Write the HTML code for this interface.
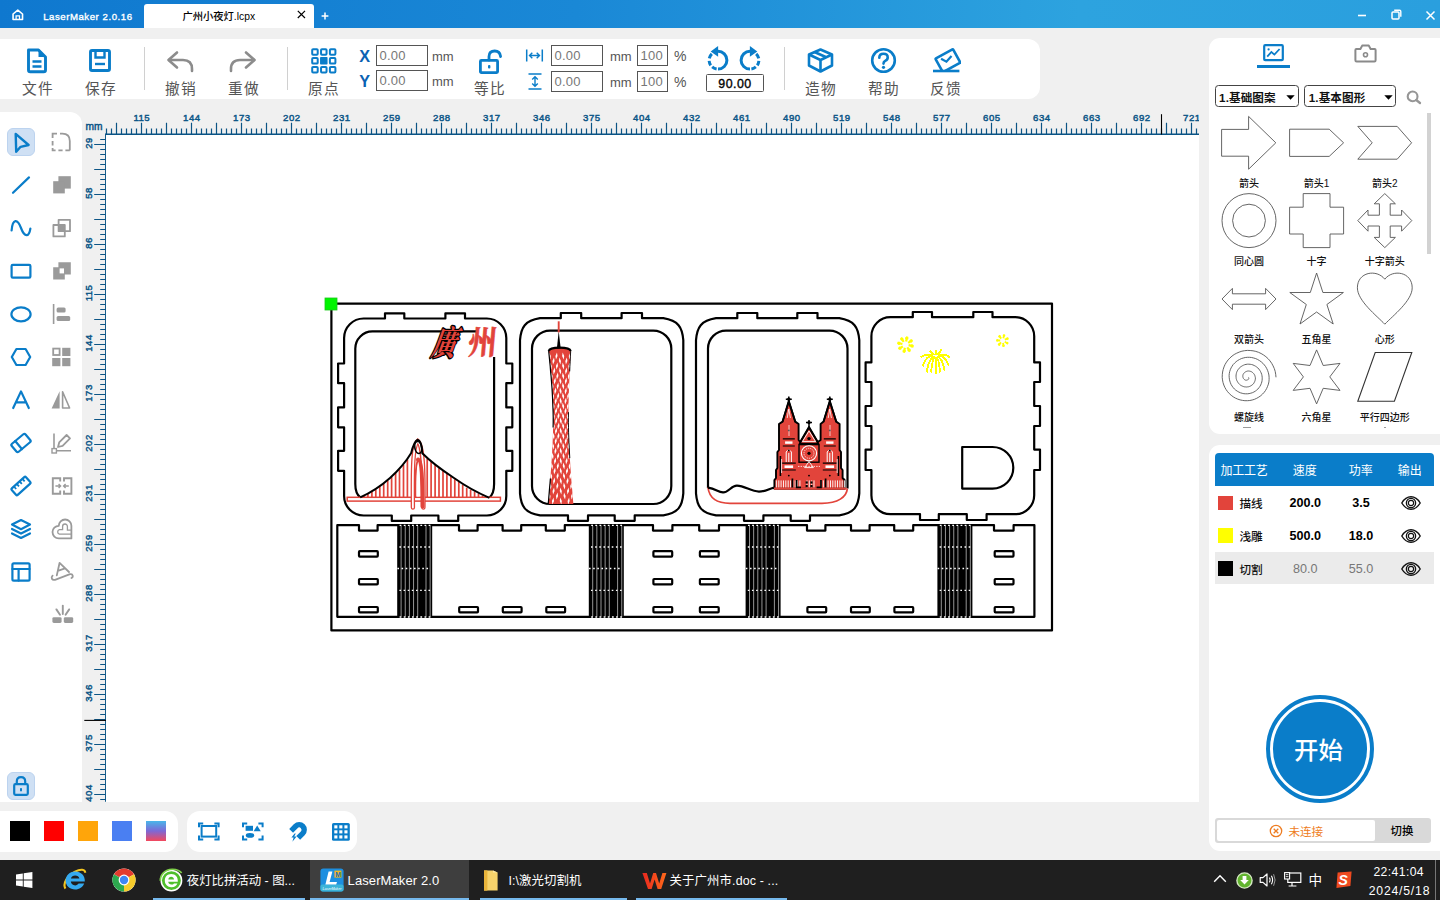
<!DOCTYPE html>
<html lang="zh"><head><meta charset="utf-8"><title>LaserMaker 2.0.16</title>
<style>

*{box-sizing:border-box;margin:0;padding:0}
html,body{width:1440px;height:900px;overflow:hidden;background:#f0f0f0;font-family:"Liberation Sans","Noto Sans CJK SC",sans-serif;}
.abs{position:absolute}
svg{position:absolute;overflow:visible}
.t{position:absolute;white-space:nowrap;line-height:1}
.panel{position:absolute;background:#fff}
#titlebar{position:absolute;left:0;top:0;width:1440px;height:28px;background:linear-gradient(90deg,#0f78cf 0%,#1a88d6 40%,#2da3df 75%,#2a9fde 100%)}
#tab{position:absolute;left:144px;top:4px;width:170px;height:24px;background:#fff;border-radius:3px 3px 0 0}
.tbl{position:absolute;padding-top:0.09em;margin-top:0.4px;margin-left:0px;font-size:14.7px;color:#555;letter-spacing:1.3px;line-height:1;white-space:nowrap;font-family:"Liberation Sans","Noto Sans CJK SC",sans-serif}
.inp{position:absolute;border:1px solid #555;background:#fff;font-size:13px;color:#777;line-height:20.4px;padding-left:2.4px;letter-spacing:0.3px;white-space:nowrap;overflow:hidden}
.mm{position:absolute;font-size:13px;color:#555;line-height:1;white-space:nowrap}
.sep{position:absolute;width:1px;background:#d0d0d0}
.rl{position:absolute;font-size:9.6px;font-weight:normal;letter-spacing:0.45px;-webkit-text-stroke:0.45px #0b5587;color:#0b5587;line-height:1;white-space:nowrap}
.shl{position:absolute;padding-top:0.09em;font-size:10px;color:#111;line-height:1;white-space:nowrap;text-align:center;font-family:"Liberation Sans","Noto Sans CJK SC",sans-serif;font-weight:500}
.tk{position:absolute;font-size:13px;color:#fff;line-height:1;white-space:nowrap;font-family:"Liberation Sans","Noto Sans CJK SC",sans-serif}

</style></head>
<body>
<!-- top -->

<div id="titlebar">
 <svg style="left:11.8px;top:9.2px" width="11.6" height="11.6" viewBox="0 0 13 13"><path d="M1.2 5.6 L6.5 1.2 L11.8 5.6 V11.8 H1.2 Z" fill="none" stroke="#fff" stroke-width="1.8" stroke-linejoin="round"/><path d="M4.6 11.8 V7.6 H8.4 V11.8" fill="none" stroke="#fff" stroke-width="1.4"/></svg>
 <div class="t" style="left:43.2px;top:11.6px;font-size:9.6px;color:#fff;letter-spacing:0.55px;-webkit-text-stroke:0.35px #fff">LaserMaker 2.0.16</div>
 <div id="tab"></div>
 <div class="t" style="left:182.4px;top:12px;font-size:10.3px;color:#000;font-weight:500;font-family:'Liberation Sans','Noto Sans CJK SC',sans-serif">广州小夜灯.lcpx</div>
 <svg style="left:297px;top:9.5px" width="9" height="9" viewBox="0 0 9 9"><path d="M0.8 0.8 L8 8 M8 0.8 L0.8 8" stroke="#000" stroke-width="1.2"/></svg>
 <svg style="left:321px;top:11.5px" width="8" height="8" viewBox="0 0 8 8"><path d="M4 0.6 V7.4 M0.6 4 H7.4" stroke="#fff" stroke-width="1.5"/></svg>
 <svg style="left:1357px;top:13.5px" width="10" height="3" viewBox="0 0 10 3"><path d="M1 1.5 H9" stroke="#fff" stroke-width="1.6"/></svg>
 <svg style="left:1390.6px;top:9.4px" width="11" height="11" viewBox="0 0 11 11"><rect x="1" y="3" width="7" height="7" rx="1" fill="none" stroke="#fff" stroke-width="1.5"/><path d="M3.2 1.2 H8.6 Q9.8 1.2 9.8 2.4 V7.8" fill="none" stroke="#fff" stroke-width="1.4"/></svg>
 <svg style="left:1424.6px;top:9.5px" width="11" height="11" viewBox="0 0 11 11"><path d="M1.5 1.5 L9.5 9.5 M9.5 1.5 L1.5 9.5" stroke="#fff" stroke-width="1.5"/></svg>
</div>
<div class="panel" style="left:-12px;top:39px;width:1052px;height:60px;border-radius:12px"></div>

<svg style="left:26px;top:48px" width="22" height="26" viewBox="0 0 22 26"><path d="M2.5 2 H12.5 L19.5 9 V22 Q19.5 23.8 17.7 23.8 H4.3 Q2.5 23.8 2.5 22 Z" fill="none" stroke="#0a7dc9" stroke-width="2.9" stroke-linejoin="round"/><path d="M12.5 2 V9 H19.5 Z" fill="#0a7dc9"/><path d="M6.5 13.5 H15.5 M6.5 18.5 H15.5" stroke="#0a7dc9" stroke-width="2.4"/></svg>
<div class="tbl" style="left:22px;top:80px">文件</div>
<svg style="left:88px;top:48px" width="24" height="26" viewBox="0 0 24 26"><rect x="2.5" y="2.5" width="19" height="20" rx="1.5" fill="none" stroke="#0a7dc9" stroke-width="2.9"/><path d="M7.5 2.5 V9.5 H16.5 V2.5" fill="none" stroke="#0a7dc9" stroke-width="2.4"/><path d="M7 16 H17" stroke="#0a7dc9" stroke-width="2.4"/></svg>
<div class="tbl" style="left:85px;top:80px">保存</div>
<div class="sep" style="left:144px;top:47px;height:43px"></div>
<svg style="left:166px;top:50px" width="28" height="24" viewBox="0 0 28 24"><path d="M11 2.5 L2.5 10 L11 17.5" fill="none" stroke="#8c8c8c" stroke-width="2.6" stroke-linecap="round" stroke-linejoin="round"/><path d="M3 10 H17 Q26 10 26 19 V21" fill="none" stroke="#8c8c8c" stroke-width="2.6" stroke-linecap="round"/></svg>
<div class="tbl" style="left:165px;top:80px">撤销</div>
<svg style="left:229px;top:50px" width="28" height="24" viewBox="0 0 28 24"><path d="M17 2.5 L25.5 10 L17 17.5" fill="none" stroke="#8c8c8c" stroke-width="2.6" stroke-linecap="round" stroke-linejoin="round"/><path d="M25 10 H11 Q2 10 2 19 V21" fill="none" stroke="#8c8c8c" stroke-width="2.6" stroke-linecap="round"/></svg>
<div class="tbl" style="left:228px;top:80px">重做</div>
<div class="sep" style="left:287px;top:47px;height:43px"></div>
<svg style="left:310.6px;top:47.8px" width="26" height="26" viewBox="0 0 26 26"><rect x="1.20" y="1.20" width="5.5" height="5.5" rx="0.9" fill="none" stroke="#0a7dc9" stroke-width="2"/><rect x="10.05" y="1.20" width="5.5" height="5.5" rx="0.9" fill="none" stroke="#0a7dc9" stroke-width="2"/><rect x="18.90" y="1.20" width="5.5" height="5.5" rx="0.9" fill="none" stroke="#0a7dc9" stroke-width="2"/><rect x="1.20" y="10.05" width="5.5" height="5.5" rx="0.9" fill="none" stroke="#0a7dc9" stroke-width="2"/><rect x="9.05" y="9.05" width="7.5" height="7.5" rx="0.8" fill="#0a7dc9"/><rect x="18.90" y="10.05" width="5.5" height="5.5" rx="0.9" fill="none" stroke="#0a7dc9" stroke-width="2"/><rect x="1.20" y="18.90" width="5.5" height="5.5" rx="0.9" fill="none" stroke="#0a7dc9" stroke-width="2"/><rect x="10.05" y="18.90" width="5.5" height="5.5" rx="0.9" fill="none" stroke="#0a7dc9" stroke-width="2"/><rect x="18.90" y="18.90" width="5.5" height="5.5" rx="0.9" fill="none" stroke="#0a7dc9" stroke-width="2"/></svg><div class="tbl" style="left:308px;top:80px">原点</div>

<div class="t" style="left:359.2px;top:47.6px;font-size:16.2px;font-weight:bold;color:#0b62b3">X</div>
<div class="t" style="left:359.2px;top:72.6px;font-size:16.2px;font-weight:bold;color:#0b62b3">Y</div>
<div class="inp" style="left:376px;top:45px;width:52px;height:21px">0.00</div>
<div class="inp" style="left:376px;top:70px;width:52px;height:21px">0.00</div>
<div class="mm" style="left:432px;top:50px">mm</div>
<div class="mm" style="left:432px;top:75px">mm</div>
<svg style="left:478px;top:49px" width="26" height="26" viewBox="0 0 26 26"><rect x="2.4" y="11.4" width="17.2" height="12.2" rx="1" fill="none" stroke="#0a7dc9" stroke-width="2.8"/><path d="M11 11 V7.5 Q11 2 16.7 2 Q22 2 22.6 7.5" fill="none" stroke="#0a7dc9" stroke-width="2.8" stroke-linecap="round"/><rect x="10" y="16" width="2.4" height="3.6" rx="1" fill="#0a7dc9"/></svg>
<div class="tbl" style="left:474px;top:80px">等比</div>
<svg style="left:525px;top:49px" width="19" height="13" viewBox="0 0 19 13"><path d="M1.7 0.5 V12.5 M17.3 0.5 V12.5" stroke="#0a7dc9" stroke-width="1.5"/><path d="M4.5 6.5 H14.5 M7.3 3.7 L4.5 6.5 L7.3 9.3 M11.7 3.7 L14.5 6.5 L11.7 9.3" fill="none" stroke="#0a7dc9" stroke-width="1.4"/></svg>
<svg style="left:528px;top:73px" width="14" height="17" viewBox="0 0 14 17"><path d="M0.5 1 H13.5 M0.5 16 H13.5" stroke="#0a7dc9" stroke-width="1.5"/><path d="M7 3.8 V13.2 M4.2 6.6 L7 3.8 L9.8 6.6 M4.2 10.4 L7 13.2 L9.8 10.4" fill="none" stroke="#0a7dc9" stroke-width="1.4"/></svg>
<div class="inp" style="left:551px;top:45px;width:52px;height:21px">0.00</div>
<div class="inp" style="left:551px;top:71px;width:52px;height:21px">0.00</div>
<div class="mm" style="left:610px;top:50px">mm</div>
<div class="mm" style="left:610px;top:76px">mm</div>
<div class="inp" style="left:637px;top:45px;width:31px;height:21px">100</div>
<div class="inp" style="left:637px;top:71px;width:31px;height:21px">100</div>
<div class="mm" style="left:674px;top:49px;font-size:14px">%</div>
<div class="mm" style="left:674px;top:75px;font-size:14px">%</div>
<svg style="left:706.3px;top:45px" width="24" height="26" viewBox="0 0 24 26"><path d="M12.00 6.30 A8.9 8.9 0 0 1 12.00 24.10" fill="none" stroke="#0a7dc9" stroke-width="3"/><path d="M10.61 23.99 A8.9 8.9 0 0 1 6.16 21.92" fill="none" stroke="#0a7dc9" stroke-width="3"/><path d="M4.71 20.30 A8.9 8.9 0 0 1 3.13 15.98" fill="none" stroke="#0a7dc9" stroke-width="3"/><path d="M3.29 13.35 A8.9 8.9 0 0 1 5.82 8.80" fill="none" stroke="#0a7dc9" stroke-width="3"/><path d="M4.7 6.5 L12.1 1.1 V11.8 Z" fill="#0a7dc9"/></svg><svg style="left:737.5px;top:45px" width="24" height="26" viewBox="0 0 24 26"><g transform="translate(24 0) scale(-1 1)"><path d="M12.00 6.30 A8.9 8.9 0 0 1 12.00 24.10" fill="none" stroke="#0a7dc9" stroke-width="3"/><path d="M10.61 23.99 A8.9 8.9 0 0 1 6.16 21.92" fill="none" stroke="#0a7dc9" stroke-width="3"/><path d="M4.71 20.30 A8.9 8.9 0 0 1 3.13 15.98" fill="none" stroke="#0a7dc9" stroke-width="3"/><path d="M3.29 13.35 A8.9 8.9 0 0 1 5.82 8.80" fill="none" stroke="#0a7dc9" stroke-width="3"/><path d="M4.7 6.5 L12.1 1.1 V11.8 Z" fill="#0a7dc9"/></g></svg>

<div class="inp" style="left:706px;top:74px;width:58px;height:18px;color:#000;line-height:18.6px;text-align:center;padding:0;font-size:12.4px;-webkit-text-stroke:0.35px #000;letter-spacing:0.45px;border-radius:1.5px">90.00</div>
<div class="sep" style="left:784px;top:47px;height:43px"></div>
<svg style="left:807px;top:48px" width="27" height="25" viewBox="0 0 27 25"><path d="M13.5 1.5 L25 6.5 V17.5 L13.5 23.5 L2 17.5 V6.5 Z" fill="none" stroke="#0a7dc9" stroke-width="2.6" stroke-linejoin="round"/><path d="M2 6.5 L13.5 12 L25 6.5 M13.5 12 V23.5 M7.5 4 L19.3 9.3" fill="none" stroke="#0a7dc9" stroke-width="2.6" stroke-linejoin="round"/></svg>
<div class="tbl" style="left:805px;top:80px">造物</div>
<svg style="left:870px;top:47px" width="27" height="27" viewBox="0 0 27 27"><circle cx="13.5" cy="13.5" r="11.3" fill="none" stroke="#0a7dc9" stroke-width="2.6"/><path d="M9.3 10.8 Q9.3 6.8 13.5 6.8 Q17.7 6.8 17.7 10.4 Q17.7 12.6 15.2 13.8 Q13.5 14.6 13.5 16.6" fill="none" stroke="#0a7dc9" stroke-width="2.6" stroke-linecap="round"/><circle cx="13.5" cy="20.3" r="1.6" fill="#0a7dc9"/></svg>
<div class="tbl" style="left:868px;top:80px">帮助</div>
<svg style="left:931px;top:47px" width="30" height="27" viewBox="0 0 30 27"><clipPath id="fbc"><rect x="0" y="0" width="30" height="23.4"/></clipPath><g clip-path="url(#fbc)"><g transform="rotate(-29 16 12)"><rect x="6" y="6.2" width="20" height="15.4" rx="0.6" fill="none" stroke="#0a7dc9" stroke-width="2.6"/><path d="M10.6 10.2 L15 14.4 L21.4 10.2" fill="none" stroke="#0a7dc9" stroke-width="2.2" transform="rotate(14 16 11)"/></g></g><path d="M2 24 H28.4" stroke="#0a7dc9" stroke-width="2.6"/></svg>
<div class="tbl" style="left:930px;top:80px">反馈</div>

<!-- left -->
<div class="panel" style="left:-12px;top:112px;width:94px;height:690px;border-radius:0 12px 0 0"></div>
<div class="abs" style="left:7px;top:128px;width:28px;height:28px;border-radius:6px;background:#cfe0f4;border:1px solid #bcd3ef"></div>
<svg style="left:7px;top:128px" width="28" height="28" viewBox="0 0 28 28"><path d="M8.7 5.9 L21.6 17 L13.6 18.8 L9.2 23.8 Z" fill="none" stroke="#0a7dc9" stroke-width="2.4" stroke-linejoin="round" stroke-linecap="round"/></svg>
<svg style="left:7px;top:171px" width="28" height="28" viewBox="0 0 28 28"><path d="M6 21.8 L22 6.4" fill="none" stroke="#0a7dc9" stroke-width="2.2" stroke-linejoin="round" stroke-linecap="round"/></svg>
<svg style="left:7px;top:214px" width="28" height="28" viewBox="0 0 28 28"><path d="M4.6 16.5 C5.6 4.5 10.5 4.5 14 14 C17.5 23.5 22 23.5 23.4 14.5" fill="none" stroke="#0a7dc9" stroke-width="2.2" stroke-linejoin="round" stroke-linecap="round"/></svg>
<svg style="left:7px;top:257px" width="28" height="28" viewBox="0 0 28 28"><rect x="4.6" y="7.8" width="18.8" height="12.8" rx="1.2" fill="none" stroke="#0a7dc9" stroke-width="2.2" stroke-linejoin="round" stroke-linecap="round"/></svg>
<svg style="left:7px;top:300px" width="28" height="28" viewBox="0 0 28 28"><ellipse cx="14" cy="14.3" rx="9.6" ry="7" fill="none" stroke="#0a7dc9" stroke-width="2.2" stroke-linejoin="round" stroke-linecap="round"/></svg>
<svg style="left:7px;top:343px" width="28" height="28" viewBox="0 0 28 28"><path d="M4.8 14 L9.4 6 H18.6 L23.2 14 L18.6 22 H9.4 Z" fill="none" stroke="#0a7dc9" stroke-width="2.2" stroke-linejoin="round" stroke-linecap="round"/></svg>
<svg style="left:7px;top:386px" width="28" height="28" viewBox="0 0 28 28"><path d="M6.2 22 L14 5.4 L21.8 22 M8.8 16.4 H19.2" fill="none" stroke="#0a7dc9" stroke-width="2.2" stroke-linejoin="round" stroke-linecap="round"/></svg>
<svg style="left:7px;top:429px" width="28" height="28" viewBox="0 0 28 28"><g transform="rotate(-40 14 14)"><rect x="5" y="8.8" width="18" height="10.4" rx="1.6" fill="none" stroke="#0a7dc9" stroke-width="2.2" stroke-linejoin="round" stroke-linecap="round"/><path d="M10.8 8.8 V19.2" fill="none" stroke="#0a7dc9" stroke-width="2.2" stroke-linejoin="round" stroke-linecap="round"/></g></svg>
<svg style="left:7px;top:472px" width="28" height="28" viewBox="0 0 28 28"><g transform="rotate(-42 14 14)"><rect x="4.4" y="9.6" width="19.2" height="8.8" rx="1.2" fill="none" stroke="#0a7dc9" stroke-width="2.2" stroke-linejoin="round" stroke-linecap="round"/><path d="M8.4 9.6 V13 M12.2 9.6 V13 M16 9.6 V13 M19.8 9.6 V13" fill="none" stroke="#0a7dc9" stroke-width="1.8"/></g></svg>
<svg style="left:7px;top:515px" width="28" height="28" viewBox="0 0 28 28"><path d="M14 5 L23 9.6 L14 14.2 L5 9.6 Z" fill="none" stroke="#0a7dc9" stroke-width="2.2" stroke-linejoin="round" stroke-linecap="round"/><path d="M5 14 L14 18.6 L23 14 M5 18.4 L14 23 L23 18.4" fill="none" stroke="#0a7dc9" stroke-width="2.2" stroke-linejoin="round" stroke-linecap="round"/></svg>
<svg style="left:7px;top:558px" width="28" height="28" viewBox="0 0 28 28"><rect x="5.4" y="5.4" width="17.2" height="17.2" rx="1.4" fill="none" stroke="#0a7dc9" stroke-width="2.2" stroke-linejoin="round" stroke-linecap="round"/><path d="M5.4 11 H22.6 M11.6 11 V22.6" fill="none" stroke="#0a7dc9" stroke-width="2.2" stroke-linejoin="round" stroke-linecap="round"/></svg>
<svg style="left:47px;top:128px" width="28" height="28" viewBox="0 0 28 28"><path d="M5.6 10 V5.6 H10 M5.6 13 V17.6 M5.6 20 V22.4 H8.6 M11.4 22.4 H15.6 M18.4 22.4 H22.8" fill="none" stroke="#9a9a9a" stroke-width="1.8"/><path d="M13 5.6 H15.4 Q22.8 5.6 22.8 13 V22.4" fill="none" stroke="#9a9a9a" stroke-width="1.8"/></svg>
<svg style="left:47px;top:171px" width="28" height="28" viewBox="0 0 28 28"><rect x="11.4" y="5.2" width="12.4" height="12.4" fill="#9a9a9a"/><rect x="6.2" y="10.2" width="11.6" height="12.2" fill="#9a9a9a"/></svg>
<svg style="left:47px;top:214px" width="28" height="28" viewBox="0 0 28 28"><rect x="11.6" y="5.8" width="11.4" height="11.4" fill="none" stroke="#9a9a9a" stroke-width="1.8" stroke-linejoin="round" stroke-linecap="round"/><rect x="6.4" y="11" width="11.4" height="11.4" fill="none" stroke="#9a9a9a" stroke-width="1.8" stroke-linejoin="round" stroke-linecap="round"/><rect x="11.6" y="11" width="6.2" height="6.2" fill="#9a9a9a"/></svg>
<svg style="left:47px;top:257px" width="28" height="28" viewBox="0 0 28 28"><path d="M11.4 5.2 H23.8 V17.6 H17.8 V22.4 H6.2 V10.2 H11.4 Z" fill="#9a9a9a"/><rect x="12.6" y="11.4" width="4.4" height="5" fill="#fff"/></svg>
<svg style="left:47px;top:300px" width="28" height="28" viewBox="0 0 28 28"><path d="M6.6 4 V24" fill="none" stroke="#9a9a9a" stroke-width="1.6"/><rect x="9.6" y="7.4" width="9" height="5" rx="1.5" fill="#9a9a9a"/><rect x="9.6" y="16" width="13.6" height="5" rx="1.5" fill="#9a9a9a"/></svg>
<svg style="left:47px;top:343px" width="28" height="28" viewBox="0 0 28 28"><rect x="6.2" y="5.6" width="6.4" height="6.4" fill="none" stroke="#9a9a9a" stroke-width="1.8"/><rect x="15.2" y="4.8" width="8.2" height="8.2" fill="#9a9a9a"/><rect x="5.2" y="15" width="8.2" height="8.2" fill="#9a9a9a"/><rect x="15.2" y="15" width="8.2" height="8.2" fill="#9a9a9a"/></svg>
<svg style="left:47px;top:386px" width="28" height="28" viewBox="0 0 28 28"><path d="M12.6 5.2 V22.6 H4.6 Z" fill="#9a9a9a"/><path d="M15.6 5.8 V22 H22.6 Z" fill="none" stroke="#9a9a9a" stroke-width="1.6" stroke-linejoin="round"/></svg>
<svg style="left:47px;top:429px" width="28" height="28" viewBox="0 0 28 28"><path d="M7 4.4 V20.6 M7.6 21.8 H24" fill="none" stroke="#9a9a9a" stroke-width="1.6"/><rect x="5" y="19.6" width="4.4" height="4.4" fill="#fff" stroke="#9a9a9a" stroke-width="1.4"/><path d="M11 18 L12.2 13.4 L19.6 6 L23 9.4 L15.6 16.8 Z" fill="none" stroke="#9a9a9a" stroke-width="1.8" stroke-linejoin="round" stroke-linecap="round"/></svg>
<svg style="left:47px;top:472px" width="28" height="28" viewBox="0 0 28 28"><path d="M13.2 9.6 V6.2 H5.8 V21.8 H13.2 V18.4 M17 9.6 V6.2 H24.4 V21.8 H17 V18.4" fill="none" stroke="#9a9a9a" stroke-width="1.9"/><path d="M8.4 14 H13.6 M11.6 12 L13.6 14 L11.6 16 M21.8 14 H16.6 M18.6 12 L16.6 14 L18.6 16" fill="none" stroke="#9a9a9a" stroke-width="1.4"/></svg>
<svg style="left:47px;top:515px" width="28" height="28" viewBox="0 0 28 28"><path d="M11.8 23.4 H24.4 V10.8 A6.3 6.3 0 0 0 11.8 10.8 A6.3 6.3 0 0 0 11.8 23.4 Z" fill="none" stroke="#9a9a9a" stroke-width="1.8" stroke-linejoin="round" stroke-linecap="round"/><path d="M24.4 19.2 H12.4 A2.4 2.4 0 0 1 12.4 14.6 H15.6 V11.4 A2.4 2.4 0 0 1 20.4 11.4 V15.2 H24.4" fill="none" stroke="#9a9a9a" stroke-width="1.3"/></svg>
<svg style="left:47px;top:558px" width="28" height="28" viewBox="0 0 28 28"><path d="M9.8 17.4 L12.6 4.8 L22 14 M10.8 12.8 L18 10.4" fill="none" stroke="#9a9a9a" stroke-width="1.8" stroke-linejoin="round" stroke-linecap="round"/><path d="M5.6 17.6 C3.6 19.6 5 22.6 8 21.8 L23 16.2 C26 15.4 26.6 19 24.4 20" fill="none" stroke="#9a9a9a" stroke-width="1.8" stroke-linejoin="round" stroke-linecap="round"/></svg>
<svg style="left:48px;top:601px" width="28" height="28" viewBox="0 0 28 28"><rect x="4.4" y="16.2" width="9.2" height="5.8" rx="1.4" fill="#9a9a9a"/><rect x="15.8" y="16.2" width="9.4" height="5.8" rx="1.4" fill="#9a9a9a"/><path d="M14.8 4.6 V13 M8.4 8.4 L12 13.8 M21.2 8.4 L17.6 13.8" fill="none" stroke="#9a9a9a" stroke-width="1.9" stroke-linecap="round"/></svg>
<div class="abs" style="left:7.2px;top:772.2px;width:27.6px;height:27.8px;border-radius:6px;background:#cfe0f4;border:1px solid #bcd3ef"></div>
<svg style="left:7px;top:772px" width="28" height="28" viewBox="0 0 28 28"><rect x="7.2" y="12.2" width="13.6" height="10.6" rx="1.2" fill="none" stroke="#0a7dc9" stroke-width="2.2" stroke-linejoin="round" stroke-linecap="round"/><path d="M9.8 12 V9.6 Q9.8 5.2 14 5.2 Q18.2 5.2 18.2 9.6 V12" fill="none" stroke="#0a7dc9" stroke-width="2.2" stroke-linejoin="round" stroke-linecap="round"/><rect x="13" y="16" width="2" height="3.4" rx="0.8" fill="#0a7dc9"/></svg>

<!-- ruler -->
<svg style="left:0;top:0" width="1440" height="900" viewBox="0 0 1440 900" shape-rendering="auto"><path d="M106.5 128.6V134M111.5 128.6V134M121.5 128.6V134M126.5 128.6V134M131.5 128.6V134M136.5 128.6V134M146.5 128.6V134M151.5 128.6V134M156.5 128.6V134M161.5 128.6V134M171.5 128.6V134M176.5 128.6V134M181.5 128.6V134M186.5 128.6V134M196.5 128.6V134M201.5 128.6V134M206.5 128.6V134M211.5 128.6V134M221.5 128.6V134M226.5 128.6V134M231.5 128.6V134M236.5 128.6V134M246.5 128.6V134M251.5 128.6V134M256.5 128.6V134M261.5 128.6V134M271.5 128.6V134M276.5 128.6V134M281.5 128.6V134M286.5 128.6V134M296.5 128.6V134M301.5 128.6V134M306.5 128.6V134M311.5 128.6V134M321.5 128.6V134M326.5 128.6V134M331.5 128.6V134M336.5 128.6V134M346.5 128.6V134M351.5 128.6V134M356.5 128.6V134M361.5 128.6V134M371.5 128.6V134M376.5 128.6V134M381.5 128.6V134M386.5 128.6V134M396.5 128.6V134M401.5 128.6V134M406.5 128.6V134M411.5 128.6V134M421.5 128.6V134M426.5 128.6V134M431.5 128.6V134M436.5 128.6V134M446.5 128.6V134M451.5 128.6V134M456.5 128.6V134M461.5 128.6V134M471.5 128.6V134M476.5 128.6V134M481.5 128.6V134M486.5 128.6V134M496.5 128.6V134M501.5 128.6V134M506.5 128.6V134M511.5 128.6V134M521.5 128.6V134M526.5 128.6V134M531.5 128.6V134M536.5 128.6V134M546.5 128.6V134M551.5 128.6V134M556.5 128.6V134M561.5 128.6V134M571.5 128.6V134M576.5 128.6V134M581.5 128.6V134M586.5 128.6V134M596.5 128.6V134M601.5 128.6V134M606.5 128.6V134M611.5 128.6V134M621.5 128.6V134M626.5 128.6V134M631.5 128.6V134M636.5 128.6V134M646.5 128.6V134M651.5 128.6V134M656.5 128.6V134M661.5 128.6V134M671.5 128.6V134M676.5 128.6V134M681.5 128.6V134M686.5 128.6V134M696.5 128.6V134M701.5 128.6V134M706.5 128.6V134M711.5 128.6V134M721.5 128.6V134M726.5 128.6V134M731.5 128.6V134M736.5 128.6V134M746.5 128.6V134M751.5 128.6V134M756.5 128.6V134M761.5 128.6V134M771.5 128.6V134M776.5 128.6V134M781.5 128.6V134M786.5 128.6V134M796.5 128.6V134M801.5 128.6V134M806.5 128.6V134M811.5 128.6V134M821.5 128.6V134M826.5 128.6V134M831.5 128.6V134M836.5 128.6V134M846.5 128.6V134M851.5 128.6V134M856.5 128.6V134M861.5 128.6V134M871.5 128.6V134M876.5 128.6V134M881.5 128.6V134M886.5 128.6V134M896.5 128.6V134M901.5 128.6V134M906.5 128.6V134M911.5 128.6V134M921.5 128.6V134M926.5 128.6V134M931.5 128.6V134M936.5 128.6V134M946.5 128.6V134M951.5 128.6V134M956.5 128.6V134M961.5 128.6V134M971.5 128.6V134M976.5 128.6V134M981.5 128.6V134M986.5 128.6V134M996.5 128.6V134M1001.5 128.6V134M1006.5 128.6V134M1011.5 128.6V134M1021.5 128.6V134M1026.5 128.6V134M1031.5 128.6V134M1036.5 128.6V134M1046.5 128.6V134M1051.5 128.6V134M1056.5 128.6V134M1061.5 128.6V134M1071.5 128.6V134M1076.5 128.6V134M1081.5 128.6V134M1086.5 128.6V134M1096.5 128.6V134M1101.5 128.6V134M1106.5 128.6V134M1111.5 128.6V134M1121.5 128.6V134M1126.5 128.6V134M1131.5 128.6V134M1136.5 128.6V134M1146.5 128.6V134M1151.5 128.6V134M1156.5 128.6V134M1161.5 128.6V134M1171.5 128.6V134M1176.5 128.6V134M1181.5 128.6V134M1186.5 128.6V134M1196.5 128.6V134M116.5 122.8V134M141.5 122.8V134M166.5 122.8V134M191.5 122.8V134M216.5 122.8V134M241.5 122.8V134M266.5 122.8V134M291.5 122.8V134M316.5 122.8V134M341.5 122.8V134M366.5 122.8V134M391.5 122.8V134M416.5 122.8V134M441.5 122.8V134M466.5 122.8V134M491.5 122.8V134M516.5 122.8V134M541.5 122.8V134M566.5 122.8V134M591.5 122.8V134M616.5 122.8V134M641.5 122.8V134M666.5 122.8V134M691.5 122.8V134M716.5 122.8V134M741.5 122.8V134M766.5 122.8V134M791.5 122.8V134M816.5 122.8V134M841.5 122.8V134M866.5 122.8V134M891.5 122.8V134M916.5 122.8V134M941.5 122.8V134M966.5 122.8V134M991.5 122.8V134M1016.5 122.8V134M1041.5 122.8V134M1066.5 122.8V134M1091.5 122.8V134M1116.5 122.8V134M1141.5 122.8V134M1166.5 122.8V134M1191.5 122.8V134" stroke="#0b5485" stroke-width="1.2" fill="none"/><path d="M100.2 139.5H105.5M94.2 144.5H105.5M100.2 149.5H105.5M100.2 154.5H105.5M100.2 159.5H105.5M100.2 164.5H105.5M94.2 169.5H105.5M100.2 174.5H105.5M100.2 179.5H105.5M100.2 184.5H105.5M100.2 189.5H105.5M94.2 194.5H105.5M100.2 199.5H105.5M100.2 204.5H105.5M100.2 209.5H105.5M100.2 214.5H105.5M94.2 219.5H105.5M100.2 224.5H105.5M100.2 229.5H105.5M100.2 234.5H105.5M100.2 239.5H105.5M94.2 244.5H105.5M100.2 249.5H105.5M100.2 254.5H105.5M100.2 259.5H105.5M100.2 264.5H105.5M94.2 269.5H105.5M100.2 274.5H105.5M100.2 279.5H105.5M100.2 284.5H105.5M100.2 289.5H105.5M94.2 294.5H105.5M100.2 299.5H105.5M100.2 304.5H105.5M100.2 309.5H105.5M100.2 314.5H105.5M94.2 319.5H105.5M100.2 324.5H105.5M100.2 329.5H105.5M100.2 334.5H105.5M100.2 339.5H105.5M94.2 344.5H105.5M100.2 349.5H105.5M100.2 354.5H105.5M100.2 359.5H105.5M100.2 364.5H105.5M94.2 369.5H105.5M100.2 374.5H105.5M100.2 379.5H105.5M100.2 384.5H105.5M100.2 389.5H105.5M94.2 394.5H105.5M100.2 399.5H105.5M100.2 404.5H105.5M100.2 409.5H105.5M100.2 414.5H105.5M94.2 419.5H105.5M100.2 424.5H105.5M100.2 429.5H105.5M100.2 434.5H105.5M100.2 439.5H105.5M94.2 444.5H105.5M100.2 449.5H105.5M100.2 454.5H105.5M100.2 459.5H105.5M100.2 464.5H105.5M94.2 469.5H105.5M100.2 474.5H105.5M100.2 479.5H105.5M100.2 484.5H105.5M100.2 489.5H105.5M94.2 494.5H105.5M100.2 499.5H105.5M100.2 504.5H105.5M100.2 509.5H105.5M100.2 514.5H105.5M94.2 519.5H105.5M100.2 524.5H105.5M100.2 529.5H105.5M100.2 534.5H105.5M100.2 539.5H105.5M94.2 544.5H105.5M100.2 549.5H105.5M100.2 554.5H105.5M100.2 559.5H105.5M100.2 564.5H105.5M94.2 569.5H105.5M100.2 574.5H105.5M100.2 579.5H105.5M100.2 584.5H105.5M100.2 589.5H105.5M94.2 594.5H105.5M100.2 599.5H105.5M100.2 604.5H105.5M100.2 609.5H105.5M100.2 614.5H105.5M94.2 619.5H105.5M100.2 624.5H105.5M100.2 629.5H105.5M100.2 634.5H105.5M100.2 639.5H105.5M94.2 644.5H105.5M100.2 649.5H105.5M100.2 654.5H105.5M100.2 659.5H105.5M100.2 664.5H105.5M94.2 669.5H105.5M100.2 674.5H105.5M100.2 679.5H105.5M100.2 684.5H105.5M100.2 689.5H105.5M94.2 694.5H105.5M100.2 699.5H105.5M100.2 704.5H105.5M100.2 709.5H105.5M100.2 714.5H105.5M94.2 719.5H105.5M100.2 724.5H105.5M100.2 729.5H105.5M100.2 734.5H105.5M100.2 739.5H105.5M94.2 744.5H105.5M100.2 749.5H105.5M100.2 754.5H105.5M100.2 759.5H105.5M100.2 764.5H105.5M94.2 769.5H105.5M100.2 774.5H105.5M100.2 779.5H105.5M100.2 784.5H105.5M100.2 789.5H105.5M94.2 794.5H105.5M100.2 799.5H105.5" stroke="#0b5485" stroke-width="1.2" fill="none"/><path d="M105.7 134.2 H1199" stroke="#0b5485" stroke-width="1.5" fill="none"/><path d="M105.7 133.5 V801.7" stroke="#0b5485" stroke-width="1.3" fill="none"/><path d="M1161.5 114.2 V134.5" stroke="#000" stroke-width="1.1" fill="none"/><path d="M84.3 720.4 H106" stroke="#000" stroke-width="1.1" fill="none"/></svg>
<div class="rl" style="left:85.4px;top:121.6px;font-size:10.2px;letter-spacing:0.2px">mm</div>
<div class="abs" style="left:106px;top:105px;width:1093px;height:30px;overflow:hidden"><div class="rl" style="left:20.8px;top:7.5px;width:30px;text-align:center">115</div><div class="rl" style="left:70.8px;top:7.5px;width:30px;text-align:center">144</div><div class="rl" style="left:120.8px;top:7.5px;width:30px;text-align:center">173</div><div class="rl" style="left:170.8px;top:7.5px;width:30px;text-align:center">202</div><div class="rl" style="left:220.8px;top:7.5px;width:30px;text-align:center">231</div><div class="rl" style="left:270.8px;top:7.5px;width:30px;text-align:center">259</div><div class="rl" style="left:320.8px;top:7.5px;width:30px;text-align:center">288</div><div class="rl" style="left:370.8px;top:7.5px;width:30px;text-align:center">317</div><div class="rl" style="left:420.8px;top:7.5px;width:30px;text-align:center">346</div><div class="rl" style="left:470.8px;top:7.5px;width:30px;text-align:center">375</div><div class="rl" style="left:520.8px;top:7.5px;width:30px;text-align:center">404</div><div class="rl" style="left:570.8px;top:7.5px;width:30px;text-align:center">432</div><div class="rl" style="left:620.8px;top:7.5px;width:30px;text-align:center">461</div><div class="rl" style="left:670.8px;top:7.5px;width:30px;text-align:center">490</div><div class="rl" style="left:720.8px;top:7.5px;width:30px;text-align:center">519</div><div class="rl" style="left:770.8px;top:7.5px;width:30px;text-align:center">548</div><div class="rl" style="left:820.8px;top:7.5px;width:30px;text-align:center">577</div><div class="rl" style="left:870.8px;top:7.5px;width:30px;text-align:center">605</div><div class="rl" style="left:920.8px;top:7.5px;width:30px;text-align:center">634</div><div class="rl" style="left:970.8px;top:7.5px;width:30px;text-align:center">663</div><div class="rl" style="left:1020.8px;top:7.5px;width:30px;text-align:center">692</div><div class="rl" style="left:1070.8px;top:7.5px;width:30px;text-align:center">721</div></div>
<div class="abs" style="left:82px;top:135px;width:24px;height:667px;overflow:hidden"><div class="rl" style="left:-8.3px;top:2.6px;width:30px;height:10px;text-align:center;transform:rotate(-90deg)">29</div><div class="rl" style="left:-8.3px;top:52.6px;width:30px;height:10px;text-align:center;transform:rotate(-90deg)">58</div><div class="rl" style="left:-8.3px;top:102.6px;width:30px;height:10px;text-align:center;transform:rotate(-90deg)">86</div><div class="rl" style="left:-8.3px;top:152.6px;width:30px;height:10px;text-align:center;transform:rotate(-90deg)">115</div><div class="rl" style="left:-8.3px;top:202.6px;width:30px;height:10px;text-align:center;transform:rotate(-90deg)">144</div><div class="rl" style="left:-8.3px;top:252.6px;width:30px;height:10px;text-align:center;transform:rotate(-90deg)">173</div><div class="rl" style="left:-8.3px;top:302.6px;width:30px;height:10px;text-align:center;transform:rotate(-90deg)">202</div><div class="rl" style="left:-8.3px;top:352.6px;width:30px;height:10px;text-align:center;transform:rotate(-90deg)">231</div><div class="rl" style="left:-8.3px;top:402.6px;width:30px;height:10px;text-align:center;transform:rotate(-90deg)">259</div><div class="rl" style="left:-8.3px;top:452.6px;width:30px;height:10px;text-align:center;transform:rotate(-90deg)">288</div><div class="rl" style="left:-8.3px;top:502.6px;width:30px;height:10px;text-align:center;transform:rotate(-90deg)">317</div><div class="rl" style="left:-8.3px;top:552.6px;width:30px;height:10px;text-align:center;transform:rotate(-90deg)">346</div><div class="rl" style="left:-8.3px;top:602.6px;width:30px;height:10px;text-align:center;transform:rotate(-90deg)">375</div><div class="rl" style="left:-8.3px;top:652.6px;width:30px;height:10px;text-align:center;transform:rotate(-90deg)">404</div></div>

<!-- canvas -->
<div class="abs" style="left:106.4px;top:135px;width:1092.8px;height:666.8px;background:#fff"></div>
<svg style="left:0;top:0" width="1440" height="900" viewBox="0 0 1440 900">
<rect x="331.4" y="303.6" width="720.6" height="326.8" fill="none" stroke="#000" stroke-width="2.2" stroke-linejoin="round"/>
<path d="M363.6 318.5 H385.0 V313.3 H404.3 V318.5 H445.4 V313.3 H465.0 V318.5 H486.8 A19.5 19.5 0 0 1 506.3 338.0 V363.5 H512.3 V383.2 H506.3 V407.4 H512.3 V427.3 H506.3 V450.8 H512.3 V470.8 H506.3 V496.0 A19.5 19.5 0 0 1 486.8 515.5 H458.2 V520.9 H438.4 V515.5 H411.2 V520.9 H391.8 V515.5 H363.6 A19.5 19.5 0 0 1 344.1 496.0 V470.8 H338.1 V450.8 H344.1 V427.3 H338.1 V407.4 H344.1 V383.2 H338.1 V363.5 H344.1 V338.0 A19.5 19.5 0 0 1 363.6 318.5 Z" fill="none" stroke="#000" stroke-width="2.2" stroke-linejoin="round"/>
<path d="M360.2 497.4 C356 494 355.3 490 355.3 484 V348.5 A17.1 17.1 0 0 1 372.4 331.4 H478 M494.1 357 V484 C494.1 490 493.5 494 489.4 497.6" fill="none" stroke="#000" stroke-width="2.2" stroke-linejoin="round"/>
<path d="M540.0 318.2 H560.8 V313.0 H581.2 V318.2 H621.6 V313.0 H642.0 V318.2 H663.3 C678.3 320.6 682.3 327.2 683.3 340.2 V493.4 C682.3 506.4 678.3 513.0 663.3 515.4 H634.7 V520.8 H614.7 V515.4 H588.0 V520.8 H568.0 V515.4 H540.0 C525.0 513.0 521.0 506.4 520.0 493.4 V340.2 C521.0 327.2 525.0 320.6 540.0 318.2 Z" fill="none" stroke="#000" stroke-width="2.2" stroke-linejoin="round"/>
<path d="M550.0 330.6 H653.3 A18.0 18.0 0 0 1 671.3 348.6 V486.0 A18.0 18.0 0 0 1 653.3 504.0 H550.0 A18.0 18.0 0 0 1 532.0 486.0 V348.6 A18.0 18.0 0 0 1 550.0 330.6 Z" fill="none" stroke="#000" stroke-width="2.2" stroke-linejoin="round"/>
<path d="M716.0 318.2 H737.3 V313.0 H757.3 V318.2 H797.3 V313.0 H817.5 V318.2 H839.3 C854.3 320.6 858.3 327.2 859.3 340.2 V493.4 C858.3 506.4 854.3 513.0 839.3 515.4 H810.0 V520.8 H790.7 V515.4 H763.4 V520.8 H744.0 V515.4 H716.0 C701.0 513.0 697.0 506.4 696.0 493.4 V340.2 C697.0 327.2 701.0 320.6 716.0 318.2 Z" fill="none" stroke="#000" stroke-width="2.2" stroke-linejoin="round"/>
<path d="M708 488 V348.6 A18 18 0 0 1 726 330.6 H829.5 A18 18 0 0 1 847.5 348.6 V488.5" fill="none" stroke="#000" stroke-width="2.2" stroke-linejoin="round"/>
<path d="M708 487.5 C709 496 714 503.3 730 503.3 H822 C838 503.3 846.5 497 847.4 488.6" fill="none" stroke="#e2443b" stroke-width="1.7"/>
<path d="M708 487.6 C716 489 718 492 723 492.3 C729 492.6 731 485.4 737 485.6 C745 486 751 491.5 759 491.6 C766 491.6 769 488.8 774 487.6" fill="none" stroke="#000" stroke-width="2.2" stroke-linejoin="round"/>
<path d="M890.4 317.2 H912.8 V312.0 H932.0 V317.2 H973.3 V312.0 H992.5 V317.2 H1015.2 A19.0 19.0 0 0 1 1034.2 336.2 V362.4 H1040.0 V382.0 H1034.2 V406.0 H1040.0 V426.0 H1034.2 V449.6 H1040.0 V470.0 H1034.2 V495.2 A19.0 19.0 0 0 1 1015.2 514.2 H986.6 V520.0 H966.8 V514.2 H938.8 V520.0 H920.0 V514.2 H890.4 A19.0 19.0 0 0 1 871.4 495.2 V470.0 H865.6 V449.6 H871.4 V426.0 H865.6 V406.0 H871.4 V382.0 H865.6 V362.4 H871.4 V336.2 A19.0 19.0 0 0 1 890.4 317.2 Z" fill="none" stroke="#000" stroke-width="2.2" stroke-linejoin="round"/>
<path d="M962.2 447 H992.5 A20.8 20.8 0 0 1 992.5 488.6 H962.2 Z" fill="none" stroke="#000" stroke-width="2.2" stroke-linejoin="round"/>
<path d="M337.3 525.2 H359.0 V530.6 H377.6 V525.2 H459.0 V530.6 H477.6 V525.2 H502.6 V530.6 H521.2 V525.2 H545.8 V530.6 H564.8 V525.2 H653.0 V530.6 H672.4 V525.2 H699.2 V530.6 H719.0 V525.2 H807.0 V530.6 H825.4 V525.2 H851.0 V530.6 H869.6 V525.2 H894.2 V530.6 H913.2 V525.2 H994.0 V530.6 H1013.6 V525.2 H1034.4 V616.8 H337.3 Z" fill="none" stroke="#000" stroke-width="2.2" stroke-linejoin="round"/>
<rect x="359.0" y="551.2" width="18.8" height="5.4" rx="0.8" fill="none" stroke="#000" stroke-width="2.2" stroke-linejoin="round"/><rect x="359.0" y="579.0" width="18.8" height="5.4" rx="0.8" fill="none" stroke="#000" stroke-width="2.2" stroke-linejoin="round"/><rect x="359.0" y="607.0" width="18.8" height="5.4" rx="0.8" fill="none" stroke="#000" stroke-width="2.2" stroke-linejoin="round"/><rect x="653.4" y="551.2" width="18.8" height="5.4" rx="0.8" fill="none" stroke="#000" stroke-width="2.2" stroke-linejoin="round"/><rect x="653.4" y="579.0" width="18.8" height="5.4" rx="0.8" fill="none" stroke="#000" stroke-width="2.2" stroke-linejoin="round"/><rect x="653.4" y="607.0" width="18.8" height="5.4" rx="0.8" fill="none" stroke="#000" stroke-width="2.2" stroke-linejoin="round"/><rect x="699.9" y="551.2" width="18.8" height="5.4" rx="0.8" fill="none" stroke="#000" stroke-width="2.2" stroke-linejoin="round"/><rect x="699.9" y="579.0" width="18.8" height="5.4" rx="0.8" fill="none" stroke="#000" stroke-width="2.2" stroke-linejoin="round"/><rect x="699.9" y="607.0" width="18.8" height="5.4" rx="0.8" fill="none" stroke="#000" stroke-width="2.2" stroke-linejoin="round"/><rect x="994.7" y="551.2" width="18.8" height="5.4" rx="0.8" fill="none" stroke="#000" stroke-width="2.2" stroke-linejoin="round"/><rect x="994.7" y="579.0" width="18.8" height="5.4" rx="0.8" fill="none" stroke="#000" stroke-width="2.2" stroke-linejoin="round"/><rect x="994.7" y="607.0" width="18.8" height="5.4" rx="0.8" fill="none" stroke="#000" stroke-width="2.2" stroke-linejoin="round"/><rect x="459.2" y="607.0" width="18.8" height="5.4" rx="0.8" fill="none" stroke="#000" stroke-width="2.2" stroke-linejoin="round"/><rect x="502.8" y="607.0" width="18.8" height="5.4" rx="0.8" fill="none" stroke="#000" stroke-width="2.2" stroke-linejoin="round"/><rect x="546.3" y="607.0" width="18.8" height="5.4" rx="0.8" fill="none" stroke="#000" stroke-width="2.2" stroke-linejoin="round"/><rect x="807.4" y="607.0" width="18.8" height="5.4" rx="0.8" fill="none" stroke="#000" stroke-width="2.2" stroke-linejoin="round"/><rect x="851.0" y="607.0" width="18.8" height="5.4" rx="0.8" fill="none" stroke="#000" stroke-width="2.2" stroke-linejoin="round"/><rect x="894.4" y="607.0" width="18.8" height="5.4" rx="0.8" fill="none" stroke="#000" stroke-width="2.2" stroke-linejoin="round"/>
<rect x="397.2" y="524.6" width="35" height="93" fill="#000"/><path d="M401.10 526V616.5M405.25 526V616.5M409.40 526V616.5M413.55 526V616.5M417.70 526V616.5M426.00 526V616.5M430.15 526V616.5" stroke="#d4d4d4" stroke-width="0.7" fill="none"/><path d="M399.40 547H401.00 M399.40 590.4H401.00M397.40 568.5H399.00M399.60 525.4H401.40 M399.60 617H401.40M403.55 547H405.15 M403.55 590.4H405.15M401.55 568.5H403.15M403.75 525.4H405.55 M403.75 617H405.55M407.70 547H409.30 M407.70 590.4H409.30M405.70 568.5H407.30M407.90 525.4H409.70 M407.90 617H409.70M411.85 547H413.45 M411.85 590.4H413.45M409.85 568.5H411.45M412.05 525.4H413.85 M412.05 617H413.85M416.00 547H417.60 M416.00 590.4H417.60M414.00 568.5H415.60M416.20 525.4H418.00 M416.20 617H418.00M420.15 547H421.75 M420.15 590.4H421.75M418.15 568.5H419.75M420.35 525.4H422.15 M420.35 617H422.15M424.30 547H425.90 M424.30 590.4H425.90M422.30 568.5H423.90M424.50 525.4H426.30 M424.50 617H426.30M428.45 547H430.05 M428.45 590.4H430.05M426.45 568.5H428.05M428.65 525.4H430.45 M428.65 617H430.45" stroke="#fff" stroke-width="1.3" fill="none"/>
<rect x="588.8" y="524.6" width="35" height="93" fill="#000"/><path d="M592.70 526V616.5M596.85 526V616.5M601.00 526V616.5M605.15 526V616.5M609.30 526V616.5M617.60 526V616.5M621.75 526V616.5" stroke="#d4d4d4" stroke-width="0.7" fill="none"/><path d="M591.00 547H592.60 M591.00 590.4H592.60M589.00 568.5H590.60M591.20 525.4H593.00 M591.20 617H593.00M595.15 547H596.75 M595.15 590.4H596.75M593.15 568.5H594.75M595.35 525.4H597.15 M595.35 617H597.15M599.30 547H600.90 M599.30 590.4H600.90M597.30 568.5H598.90M599.50 525.4H601.30 M599.50 617H601.30M603.45 547H605.05 M603.45 590.4H605.05M601.45 568.5H603.05M603.65 525.4H605.45 M603.65 617H605.45M607.60 547H609.20 M607.60 590.4H609.20M605.60 568.5H607.20M607.80 525.4H609.60 M607.80 617H609.60M611.75 547H613.35 M611.75 590.4H613.35M609.75 568.5H611.35M611.95 525.4H613.75 M611.95 617H613.75M615.90 547H617.50 M615.90 590.4H617.50M613.90 568.5H615.50M616.10 525.4H617.90 M616.10 617H617.90M620.05 547H621.65 M620.05 590.4H621.65M618.05 568.5H619.65M620.25 525.4H622.05 M620.25 617H622.05" stroke="#fff" stroke-width="1.3" fill="none"/>
<rect x="745.6" y="524.6" width="35" height="93" fill="#000"/><path d="M749.50 526V616.5M753.65 526V616.5M757.80 526V616.5M761.95 526V616.5M766.10 526V616.5M774.40 526V616.5M778.55 526V616.5" stroke="#d4d4d4" stroke-width="0.7" fill="none"/><path d="M747.80 547H749.40 M747.80 590.4H749.40M745.80 568.5H747.40M748.00 525.4H749.80 M748.00 617H749.80M751.95 547H753.55 M751.95 590.4H753.55M749.95 568.5H751.55M752.15 525.4H753.95 M752.15 617H753.95M756.10 547H757.70 M756.10 590.4H757.70M754.10 568.5H755.70M756.30 525.4H758.10 M756.30 617H758.10M760.25 547H761.85 M760.25 590.4H761.85M758.25 568.5H759.85M760.45 525.4H762.25 M760.45 617H762.25M764.40 547H766.00 M764.40 590.4H766.00M762.40 568.5H764.00M764.60 525.4H766.40 M764.60 617H766.40M768.55 547H770.15 M768.55 590.4H770.15M766.55 568.5H768.15M768.75 525.4H770.55 M768.75 617H770.55M772.70 547H774.30 M772.70 590.4H774.30M770.70 568.5H772.30M772.90 525.4H774.70 M772.90 617H774.70M776.85 547H778.45 M776.85 590.4H778.45M774.85 568.5H776.45M777.05 525.4H778.85 M777.05 617H778.85" stroke="#fff" stroke-width="1.3" fill="none"/>
<rect x="937.4" y="524.6" width="35" height="93" fill="#000"/><path d="M941.30 526V616.5M945.45 526V616.5M949.60 526V616.5M953.75 526V616.5M957.90 526V616.5M966.20 526V616.5M970.35 526V616.5" stroke="#d4d4d4" stroke-width="0.7" fill="none"/><path d="M939.60 547H941.20 M939.60 590.4H941.20M937.60 568.5H939.20M939.80 525.4H941.60 M939.80 617H941.60M943.75 547H945.35 M943.75 590.4H945.35M941.75 568.5H943.35M943.95 525.4H945.75 M943.95 617H945.75M947.90 547H949.50 M947.90 590.4H949.50M945.90 568.5H947.50M948.10 525.4H949.90 M948.10 617H949.90M952.05 547H953.65 M952.05 590.4H953.65M950.05 568.5H951.65M952.25 525.4H954.05 M952.25 617H954.05M956.20 547H957.80 M956.20 590.4H957.80M954.20 568.5H955.80M956.40 525.4H958.20 M956.40 617H958.20M960.35 547H961.95 M960.35 590.4H961.95M958.35 568.5H959.95M960.55 525.4H962.35 M960.55 617H962.35M964.50 547H966.10 M964.50 590.4H966.10M962.50 568.5H964.10M964.70 525.4H966.50 M964.70 617H966.50M968.65 547H970.25 M968.65 590.4H970.25M966.65 568.5H968.25M968.85 525.4H970.65 M968.85 617H970.65" stroke="#fff" stroke-width="1.3" fill="none"/>
<rect x="325" y="298" width="12" height="12" fill="#00f500" stroke="#19c819" stroke-width="0.8"/>
</svg>
<svg style="left:0;top:0" width="1440" height="900" viewBox="0 0 1440 900">
<path d="M364.0 495.9V497M367.9 493.9V497M371.9 491.8V497M375.8 489.5V497M379.8 486.5V497M383.7 483.5V497M387.7 480.6V497M391.6 476.9V497M395.6 473.1V497M399.5 469.4V497M403.5 464.7V497M407.4 459.4V497M427.2 458.7V497M431.1 461.9V497M435.1 465.0V497M439.0 468.1V497M443.0 471.0V497M446.9 473.8V497M450.9 476.5V497M454.8 479.3V497M458.8 482.1V497M462.7 484.9V497M466.7 487.7V497M470.6 489.7V497M474.6 491.6V497M478.5 493.6V497M482.5 495.4V497M486.4 497.1V497" stroke="#e2443b" stroke-width="1.7" fill="none"/>
<rect x="347.2" y="497.3" width="153.2" height="3.8" fill="#fff" stroke="#e2443b" stroke-width="1.5"/>
<path d="M412.9 507.5 C412.6 470 412.6 446 417.8 441 C423.2 446 423.8 470 423.4 507.5" fill="none" stroke="#e2443b" stroke-width="4.4" stroke-linecap="round"/>
<path d="M412.9 507.5 C412.6 470 412.6 446 417.8 441 C423.2 446 423.8 470 423.4 507.5" fill="none" stroke="#fff" stroke-width="1.8" stroke-linecap="round"/>
<path d="M415.4 497 C415.2 478 415.6 461.5 418.4 459.8" fill="none" stroke="#e2443b" stroke-width="2" stroke-linecap="round"/>
<path d="M418 459.6 C421.8 460 422.4 480 422.5 506.5" fill="none" stroke="#e2443b" stroke-width="4" stroke-linecap="round"/>
<path d="M416.6 496.4 C416.6 480 416.8 468 418 464.5 C419.4 468 419.6 480 419.7 496.4 Z" fill="#fff"/>
<path d="M360.2 497.4 C370 493 381 486 390 478 C400 469 407 460 411.2 453 C412.6 447 414 441.5 417.4 439.8 C420.5 440 422.4 447 422.3 453.2 C430 461 442 470 454 478 C466 486.5 478 493 489.4 497.8" fill="none" stroke="#000" stroke-width="2" stroke-linejoin="round"/>
<ellipse cx="418.2" cy="447.5" rx="3.4" ry="6" fill="none" stroke="#000" stroke-width="1.6" transform="rotate(-8 418.2 447.5)"/>
<clipPath id="twc"><path d="M548.7 351.0 C550 346.6 569.4 346.6 570.7 351.0 L570.4 356.1 L570.2 361.2 L569.9 366.3 L569.7 371.4 L569.5 376.5 L569.3 381.6 L569.1 386.7 L568.9 391.8 L568.8 396.9 L568.6 402.0 L568.5 407.1 L568.5 412.2 L568.4 417.3 L568.4 422.4 L568.5 427.5 L568.6 432.6 L568.8 437.7 L569.0 442.8 L569.3 447.9 L569.5 453.0 L569.8 458.1 L570.2 463.2 L570.5 468.3 L570.9 473.4 L571.2 478.5 L571.6 483.6 L572.1 488.7 L572.5 493.8 L572.9 498.9 L573.4 504.0 L548.2 504.0 L548.7 498.9 L549.1 493.8 L549.5 488.7 L550.0 483.6 L550.4 478.5 L550.7 473.4 L551.1 468.3 L551.4 463.2 L551.8 458.1 L552.1 453.0 L552.3 447.9 L552.6 442.8 L552.8 437.7 L553.0 432.6 L553.1 427.5 L553.2 422.4 L553.2 417.3 L553.1 412.2 L552.9 407.1 L552.7 402.0 L552.5 396.9 L552.2 391.8 L551.9 386.7 L551.5 381.6 L551.1 376.5 L550.6 371.4 L550.2 366.3 L549.7 361.2 L549.2 356.1 L548.7 351.0 Z"/></clipPath>
<path d="M548.7 351.0 C550 346.6 569.4 346.6 570.7 351.0 L570.4 356.1 L570.2 361.2 L569.9 366.3 L569.7 371.4 L569.5 376.5 L569.3 381.6 L569.1 386.7 L568.9 391.8 L568.8 396.9 L568.6 402.0 L568.5 407.1 L568.5 412.2 L568.4 417.3 L568.4 422.4 L568.5 427.5 L568.6 432.6 L568.8 437.7 L569.0 442.8 L569.3 447.9 L569.5 453.0 L569.8 458.1 L570.2 463.2 L570.5 468.3 L570.9 473.4 L571.2 478.5 L571.6 483.6 L572.1 488.7 L572.5 493.8 L572.9 498.9 L573.4 504.0 L548.2 504.0 L548.7 498.9 L549.1 493.8 L549.5 488.7 L550.0 483.6 L550.4 478.5 L550.7 473.4 L551.1 468.3 L551.4 463.2 L551.8 458.1 L552.1 453.0 L552.3 447.9 L552.6 442.8 L552.8 437.7 L553.0 432.6 L553.1 427.5 L553.2 422.4 L553.2 417.3 L553.1 412.2 L552.9 407.1 L552.7 402.0 L552.5 396.9 L552.2 391.8 L551.9 386.7 L551.5 381.6 L551.1 376.5 L550.6 371.4 L550.2 366.3 L549.7 361.2 L549.2 356.1 L548.7 351.0 Z" fill="#e2443b"/>
<path d="M549.29 352.40L550.84 356.00L550.29 359.60L548.74 356.00ZM556.98 352.40L557.53 356.00L555.98 359.60L555.43 356.00ZM562.66 352.40L564.21 356.00L563.66 359.60L562.11 356.00ZM570.35 352.40L570.90 356.00L569.35 359.60L568.80 356.00ZM554.00 357.40L554.55 361.00L553.00 364.60L552.45 361.00ZM559.44 357.40L560.99 361.00L560.44 364.60L558.89 361.00ZM566.88 357.40L567.43 361.00L565.88 364.60L565.33 361.00ZM572.32 357.40L573.87 361.00L573.32 364.60L571.77 361.00ZM550.25 362.40L551.80 366.00L551.25 369.60L549.70 366.00ZM557.45 362.40L558.00 366.00L556.45 369.60L555.90 366.00ZM562.66 362.40L564.21 366.00L563.66 369.60L562.11 366.00ZM569.86 362.40L570.41 366.00L568.86 369.60L568.31 366.00ZM554.69 367.40L555.24 371.00L553.69 374.60L553.14 371.00ZM559.67 367.40L561.22 371.00L560.67 374.60L559.12 371.00ZM566.64 367.40L567.19 371.00L565.64 374.60L565.09 371.00ZM571.61 367.40L573.16 371.00L572.61 374.60L571.06 371.00ZM551.14 372.40L552.69 376.00L552.14 379.60L550.59 376.00ZM557.89 372.40L558.44 376.00L556.89 379.60L556.34 376.00ZM562.65 372.40L564.20 376.00L563.65 379.60L562.10 376.00ZM569.41 372.40L569.96 376.00L568.41 379.60L567.86 376.00ZM555.32 377.40L555.87 381.00L554.32 384.60L553.77 381.00ZM559.87 377.40L561.42 381.00L560.87 384.60L559.32 381.00ZM566.42 377.40L566.97 381.00L565.42 384.60L564.87 381.00ZM570.97 377.40L572.52 381.00L571.97 384.60L570.42 381.00ZM551.91 382.40L553.46 386.00L552.91 389.60L551.36 386.00ZM558.28 382.40L558.83 386.00L557.28 389.60L556.73 386.00ZM562.64 382.40L564.19 386.00L563.64 389.60L562.09 386.00ZM569.01 382.40L569.56 386.00L568.01 389.60L567.46 386.00ZM555.85 387.40L556.40 391.00L554.85 394.60L554.30 391.00ZM560.04 387.40L561.59 391.00L561.04 394.60L559.49 391.00ZM566.24 387.40L566.79 391.00L565.24 394.60L564.69 391.00ZM570.43 387.40L571.98 391.00L571.43 394.60L569.88 391.00ZM552.54 392.40L554.09 396.00L553.54 399.60L551.99 396.00ZM558.59 392.40L559.14 396.00L557.59 399.60L557.04 396.00ZM562.64 392.40L564.19 396.00L563.64 399.60L562.09 396.00ZM568.69 392.40L569.24 396.00L567.69 399.60L567.14 396.00ZM556.26 397.40L556.81 401.00L555.26 404.60L554.71 401.00ZM560.18 397.40L561.73 401.00L561.18 404.60L559.63 401.00ZM566.10 397.40L566.65 401.00L565.10 404.60L564.55 401.00ZM570.02 397.40L571.57 401.00L571.02 404.60L569.47 401.00ZM553.00 402.40L554.55 406.00L554.00 409.60L552.45 406.00ZM558.82 402.40L559.37 406.00L557.82 409.60L557.27 406.00ZM562.64 402.40L564.19 406.00L563.64 409.60L562.09 406.00ZM568.46 402.40L569.01 406.00L567.46 409.60L566.91 406.00ZM556.52 407.40L557.07 411.00L555.52 414.60L554.97 411.00ZM560.26 407.40L561.81 411.00L561.26 414.60L559.71 411.00ZM566.01 407.40L566.56 411.00L565.01 414.60L564.46 411.00ZM569.75 407.40L571.30 411.00L570.75 414.60L569.20 411.00ZM553.25 412.40L554.80 416.00L554.25 419.60L552.70 416.00ZM558.94 412.40L559.49 416.00L557.94 419.60L557.39 416.00ZM562.63 412.40L564.18 416.00L563.63 419.60L562.08 416.00ZM568.33 412.40L568.88 416.00L567.33 419.60L566.78 416.00ZM556.63 417.40L557.18 421.00L555.63 424.60L555.08 421.00ZM560.30 417.40L561.85 421.00L561.30 424.60L559.75 421.00ZM565.97 417.40L566.52 421.00L564.97 424.60L564.42 421.00ZM569.64 417.40L571.19 421.00L570.64 424.60L569.09 421.00ZM553.26 422.40L554.81 426.00L554.26 429.60L552.71 426.00ZM558.95 422.40L559.50 426.00L557.95 429.60L557.40 426.00ZM562.65 422.40L564.20 426.00L563.65 429.60L562.10 426.00ZM568.34 422.40L568.89 426.00L567.34 429.60L566.79 426.00ZM556.53 427.40L557.08 431.00L555.53 434.60L554.98 431.00ZM560.30 427.40L561.85 431.00L561.30 434.60L559.75 431.00ZM566.07 427.40L566.62 431.00L565.07 434.60L564.52 431.00ZM569.84 427.40L571.39 431.00L570.84 434.60L569.29 431.00ZM552.98 432.40L554.53 436.00L553.98 439.60L552.43 436.00ZM558.86 432.40L559.41 436.00L557.86 439.60L557.31 436.00ZM562.74 432.40L564.29 436.00L563.74 439.60L562.19 436.00ZM568.62 432.40L569.17 436.00L567.62 439.60L567.07 436.00ZM556.28 437.40L556.83 441.00L555.28 444.60L554.73 441.00ZM560.30 437.40L561.85 441.00L561.30 444.60L559.75 441.00ZM566.32 437.40L566.87 441.00L565.32 444.60L564.77 441.00ZM570.34 437.40L571.89 441.00L571.34 444.60L569.79 441.00ZM552.54 442.40L554.09 446.00L553.54 449.60L551.99 446.00ZM558.71 442.40L559.26 446.00L557.71 449.60L557.16 446.00ZM562.89 442.40L564.44 446.00L563.89 449.60L562.34 446.00ZM569.06 442.40L569.61 446.00L568.06 449.60L567.51 446.00ZM555.95 447.40L556.50 451.00L554.95 454.60L554.40 451.00ZM560.30 447.40L561.85 451.00L561.30 454.60L559.75 451.00ZM566.65 447.40L567.20 451.00L565.65 454.60L565.10 451.00ZM570.99 447.40L572.54 451.00L571.99 454.60L570.44 451.00ZM552.00 452.40L553.55 456.00L553.00 459.60L551.45 456.00ZM558.53 452.40L559.08 456.00L557.53 459.60L556.98 456.00ZM563.07 452.40L564.62 456.00L564.07 459.60L562.52 456.00ZM569.60 452.40L570.15 456.00L568.60 459.60L568.05 456.00ZM555.56 457.40L556.11 461.00L554.56 464.60L554.01 461.00ZM560.30 457.40L561.85 461.00L561.30 464.60L559.75 461.00ZM567.04 457.40L567.59 461.00L566.04 464.60L565.49 461.00ZM571.78 457.40L573.33 461.00L572.78 464.60L571.23 461.00ZM551.36 462.40L552.91 466.00L552.36 469.60L550.81 466.00ZM558.32 462.40L558.87 466.00L557.32 469.60L556.77 466.00ZM563.28 462.40L564.83 466.00L564.28 469.60L562.73 466.00ZM570.24 462.40L570.79 466.00L569.24 469.60L568.69 466.00ZM555.11 467.40L555.66 471.00L554.11 474.60L553.56 471.00ZM560.30 467.40L561.85 471.00L561.30 474.60L559.75 471.00ZM567.49 467.40L568.04 471.00L566.49 474.60L565.94 471.00ZM572.68 467.40L574.23 471.00L573.68 474.60L572.13 471.00ZM550.65 472.40L552.20 476.00L551.65 479.60L550.10 476.00ZM558.08 472.40L558.63 476.00L557.08 479.60L556.53 476.00ZM563.52 472.40L565.07 476.00L564.52 479.60L562.97 476.00ZM570.95 472.40L571.50 476.00L569.95 479.60L569.40 476.00ZM554.61 477.40L555.16 481.00L553.61 484.60L553.06 481.00ZM560.30 477.40L561.85 481.00L561.30 484.60L559.75 481.00ZM567.99 477.40L568.54 481.00L566.99 484.60L566.44 481.00ZM573.68 477.40L575.23 481.00L574.68 484.60L573.13 481.00ZM549.87 482.40L551.42 486.00L550.87 489.60L549.32 486.00ZM557.82 482.40L558.37 486.00L556.82 489.60L556.27 486.00ZM563.78 482.40L565.33 486.00L564.78 489.60L563.23 486.00ZM571.73 482.40L572.28 486.00L570.73 489.60L570.18 486.00ZM554.07 487.40L554.62 491.00L553.07 494.60L552.52 491.00ZM560.30 487.40L561.85 491.00L561.30 494.60L559.75 491.00ZM568.53 487.40L569.08 491.00L567.53 494.60L566.98 491.00ZM574.76 487.40L576.31 491.00L575.76 494.60L574.21 491.00ZM549.02 492.40L550.57 496.00L550.02 499.60L548.47 496.00ZM557.54 492.40L558.09 496.00L556.54 499.60L555.99 496.00ZM564.06 492.40L565.61 496.00L565.06 499.60L563.51 496.00ZM572.58 492.40L573.13 496.00L571.58 499.60L571.03 496.00ZM553.48 497.40L554.03 501.00L552.48 504.60L551.93 501.00ZM560.30 497.40L561.85 501.00L561.30 504.60L559.75 501.00ZM569.12 497.40L569.67 501.00L568.12 504.60L567.57 501.00ZM575.93 497.40L577.48 501.00L576.93 504.60L575.38 501.00Z" fill="#fff" clip-path="url(#twc)"/>
<path d="M548.7 351.0 C550 346.6 569.4 346.6 570.7 351.0" fill="none" stroke="#000" stroke-width="2.2"/>
<path d="M548.7 351.0 L549.2 356.1 L549.7 361.2 L550.2 366.3 L550.6 371.4 L551.1 376.5 L551.5 381.6 L551.9 386.7 L552.2 391.8 L552.5 396.9 L552.7 402.0 L552.9 407.1 L553.1 412.2 L553.2 417.3 L553.2 422.4 L553.1 427.5" fill="none" stroke="#000" stroke-width="1.2"/>
<path d="M550.4 478.5 L550.0 483.6 L549.5 488.7 L549.1 493.8 L548.7 498.9 L548.2 504.0" fill="none" stroke="#000" stroke-width="1.2"/>
<path d="M570.7 351.0 L570.4 356.1 L570.2 361.2 L569.9 366.3 L569.7 371.4" fill="none" stroke="#000" stroke-width="0.9"/>
<path d="M568.5 412.2 L568.4 417.3 L568.4 422.4 L568.5 427.5 L568.6 432.6 L568.8 437.7 L569.0 442.8 L569.3 447.9 L569.5 453.0 L569.8 458.1" fill="none" stroke="#000" stroke-width="0.9"/>
<path d="M558.7 331 L560.7 348.4 H556.9 Z" fill="#000"/>
<path d="M558.7 321.3 V332.4" stroke="#e2443b" stroke-width="1.9" fill="none"/>
<path d="M774.4 488.8 V480 L776 478 V470 L777.4 468 V452 L779 450 V424 L782.6 421.6 L788.8 401 L795.2 421.6 L798.6 424 V440 L800.2 442 L809 427 L817.8 442 L820.6 440 V424 L823.6 421.6 L829.8 401 L836.2 421.6 L839.6 424 V450 L841 452 V468 L842.6 470 V478 L844.6 480 V488.8 Z" fill="#e2443b" stroke="#000" stroke-width="1.9" stroke-linejoin="round"/>
<path d="M774 488.6 H846.6" stroke="#e2443b" stroke-width="2.4"/>
<path d="M782.4 422 L788.8 401.5 L795.4 422 M823.4 422 L829.8 401.5 L836.4 422 M799.6 443.6 L809 427.4 L818.4 443.6 Z" fill="none" stroke="#000" stroke-width="1.7" stroke-linejoin="round"/>
<circle cx="788.8" cy="399.2" r="1.7" fill="#000"/><path d="M785.8 399.2H791.8 M788.8 396.6V403.7" stroke="#000" stroke-width="1.5"/>
<circle cx="829.8" cy="399.2" r="1.7" fill="#000"/><path d="M826.8 399.2H832.8 M829.8 396.6V403.7" stroke="#000" stroke-width="1.5"/>
<circle cx="809.0" cy="422.6" r="1.7" fill="#000"/><path d="M806.0 422.6H812.0 M809.0 420.0V427.1" stroke="#000" stroke-width="1.5"/>
<rect x="785.1" y="441.4" width="7.4" height="2.4" fill="#fff"/><rect x="784.5" y="465.4" width="8.6" height="2.6" fill="#fff"/><path d="M782.8 438.8H794.8 M782.8 446H794.8 M781.8 463.2H795.8 M781.8 470H795.8" stroke="#000" stroke-width="1.2"/><path d="M786.2 462 V452 Q788.8 448 791.4 452 V462 M788.8 462 V453" fill="none" stroke="#fff" stroke-width="1"/><circle cx="788.8" cy="430.4" r="0.9" fill="#000"/><circle cx="788.8" cy="450.4" r="0.9" fill="#000"/><circle cx="788.8" cy="475.6" r="0.9" fill="#000"/><path d="M789.0 425V436" stroke="#fff" stroke-width="0.7"/><path d="M787.2 418 L788.8 409 L790.4 418" fill="none" stroke="#fff" stroke-width="0.8"/>
<rect x="826.1" y="441.4" width="7.4" height="2.4" fill="#fff"/><rect x="825.5" y="465.4" width="8.6" height="2.6" fill="#fff"/><path d="M823.8 438.8H835.8 M823.8 446H835.8 M822.8 463.2H836.8 M822.8 470H836.8" stroke="#000" stroke-width="1.2"/><path d="M827.2 462 V452 Q829.8 448 832.4 452 V462 M829.8 462 V453" fill="none" stroke="#fff" stroke-width="1"/><circle cx="829.8" cy="430.4" r="0.9" fill="#000"/><circle cx="829.8" cy="450.4" r="0.9" fill="#000"/><circle cx="829.8" cy="475.6" r="0.9" fill="#000"/><path d="M830.0 425V436" stroke="#fff" stroke-width="0.7"/><path d="M828.2 418 L829.8 409 L831.4 418" fill="none" stroke="#fff" stroke-width="0.8"/>
<path d="M802.4 441.6 L809 431 L815.6 441.6 Z" fill="none" stroke="#fff" stroke-width="0.9"/>
<circle cx="809" cy="438.6" r="1.7" fill="#000"/>
<rect x="799" y="444.6" width="20" height="17.6" fill="none" stroke="#000" stroke-width="1.4"/>
<circle cx="809" cy="453.3" r="7.6" fill="#e2443b" stroke="#fff" stroke-width="1.1"/>
<circle cx="809" cy="453.3" r="5" fill="none" stroke="#fff" stroke-width="0.8" stroke-dasharray="1.2 1"/>
<circle cx="809" cy="453.3" r="1.6" fill="#000"/>
<path d="M804.6 467.6 L809 461.6 L813.4 467.6 Z" fill="none" stroke="#fff" stroke-width="0.9"/>
<path d="M798 466.4 H820" stroke="#fff" stroke-width="0.8" stroke-dasharray="1.4 1.2"/>
<path d="M780.4 456 V476 M838.4 456 V476" stroke="#000" stroke-width="1.6"/>
<path d="M781.6 459 V473 M837.2 459 V473" stroke="#fff" stroke-width="0.8"/>
<path d="M776.4 480.4V487.4M778.8 480.4V487.4M781.1 480.4V487.4M783.5 480.4V487.4M785.8 480.4V487.4M788.2 480.4V487.4M790.5 480.4V487.4M792.9 480.4V487.4M795.2 480.4V487.4M797.6 480.4V487.4M799.9 480.4V487.4M807.0 480.4V487.4M809.3 480.4V487.4M811.7 480.4V487.4M814.0 480.4V487.4M821.1 480.4V487.4M823.4 480.4V487.4M825.8 480.4V487.4M828.1 480.4V487.4M830.5 480.4V487.4M832.8 480.4V487.4M835.2 480.4V487.4M837.5 480.4V487.4M839.9 480.4V487.4M842.2 480.4V487.4M844.6 480.4V487.4" stroke="#fff" stroke-width="0.9"/>
<path d="M792.4 478.6 V487.4 M796.6 480 V487.4 H801 M821 480 V487.4 H816.6 M825.6 478.6 V487.4" stroke="#000" stroke-width="1.7" fill="none"/>
<rect x="805.6" y="481.4" width="2.2" height="2.2" fill="#000"/><rect x="810.4" y="481.4" width="2.2" height="2.2" fill="#000"/><rect x="805.6" y="485" width="2.2" height="2.2" fill="#000"/><rect x="810.4" y="485" width="2.2" height="2.2" fill="#000"/>
<circle cx="809" cy="475.6" r="0.9" fill="#000"/>
<path d="M908.6 345.2L913.7 346.3M907.3 347.3L910.1 351.6M904.9 347.7L903.8 352.8M902.8 346.4L898.5 349.2M902.4 344.0L897.3 342.9M903.7 341.9L900.9 337.6M906.1 341.5L907.2 336.4M908.2 342.8L912.5 340.0" stroke="#ffff00" stroke-width="2.2" fill="none"/><path d="M910.9 345.7L912.9 346.1M908.5 349.2L909.6 350.9M904.4 350.0L904.0 352.0M900.9 347.6L899.2 348.7M900.1 343.5L898.1 343.1M902.5 340.0L901.4 338.3M906.6 339.2L907.0 337.2M910.1 341.6L911.8 340.5" stroke="#ffff00" stroke-width="3.2" fill="none"/><path d="M1004.7 341.8L1008.2 343.7M1003.0 343.0L1003.7 346.9M1001.0 342.4L998.4 345.4M1000.2 340.5L996.2 340.3M1001.2 338.6L998.9 335.4M1003.3 338.3L1004.3 334.4M1004.8 339.7L1008.5 338.1" stroke="#ffff00" stroke-width="1.8" fill="none"/><path d="M1006.5 342.7L1007.9 343.5M1003.4 344.9L1003.6 346.5M999.7 343.9L998.6 345.1M998.2 340.4L996.6 340.3M1000.0 337.0L999.1 335.7M1003.8 336.4L1004.2 334.8M1006.7 338.9L1008.1 338.3" stroke="#ffff00" stroke-width="2.4" fill="none"/><path d="M933.4 355.7 Q925.8 352.8 920.6 357.5M933.6 356.6 Q926.8 354.2 922.6 366.5M934.2 357.2 Q929.4 356.6 926.6 372.5M934.9 357.2 Q932.5 358.1 931.1 372.5M935.6 357.3 Q935.6 360.0 935.6 373.5M936.3 357.2 Q938.7 358.1 940.1 372.5M937.0 357.0 Q941.8 356.1 944.6 370.5M937.6 356.5 Q944.4 354.0 948.6 365.5M937.8 355.7 Q945.1 352.8 950.1 357.5M934.7 355.0 Q931.8 353.4 929.6 350.5M936.5 354.9 Q939.4 353.2 941.6 349.5M935.6 354.9 Q935.6 354.0 935.6 349.5" stroke="#ffff00" stroke-width="1.9" fill="none" shape-rendering="crispEdges"/>
<text x="430.6" y="355.4" font-family="'Liberation Serif','Noto Serif CJK SC','Noto Sans CJK SC',serif" font-weight="700" font-size="30" fill="#e2443b" stroke="#000" stroke-width="2.6" paint-order="stroke" stroke-linejoin="round" transform="translate(430.6 355.4) skewX(-20) scale(0.8 1.13) translate(-430.6 -355.4)">廣</text>
<text x="467.4" y="353.6" font-family="'Liberation Serif','Noto Serif CJK SC','Noto Sans CJK SC',serif" font-weight="700" font-size="27" fill="#e2443b" stroke="#e2443b" stroke-width="0.5" transform="translate(467.4 353.6) skewX(-5) scale(1.06 1.22) translate(-467.4 -353.6)">州</text>
</svg>

<!-- right -->
<div class="panel" style="left:1209px;top:38px;width:245px;height:396px;border-radius:11px"></div>
<div class="panel" style="left:1209px;top:445.4px;width:245px;height:405.2px;border-radius:11px"></div>
<svg style="left:1263px;top:44px" width="21" height="18" viewBox="0 0 21 18"><rect x="1.2" y="1.2" width="18.6" height="15" rx="1" fill="none" stroke="#0a7dc9" stroke-width="2.2"/><path d="M4.2 12.6 L8.4 8 L11.4 10.6 L16.6 5" fill="none" stroke="#0a7dc9" stroke-width="1.8"/><circle cx="5.6" cy="5.4" r="1.1" fill="#0a7dc9"/></svg>
<div class="abs" style="left:1257px;top:65px;width:33px;height:3px;background:#0a7dc9"></div>
<svg style="left:1354px;top:44px" width="23" height="19" viewBox="0 0 23 19"><path d="M2.4 5 H6.4 L8.2 1.6 H14.8 L16.6 5 H20.6 Q21.6 5 21.6 6 V16.2 Q21.6 17.4 20.4 17.4 H2.6 Q1.4 17.4 1.4 16.2 V6 Q1.4 5 2.4 5 Z" fill="none" stroke="#8a8a8a" stroke-width="2" stroke-linejoin="round"/><circle cx="11.5" cy="10.8" r="2" fill="none" stroke="#8a8a8a" stroke-width="1.6"/></svg>
<div class="abs" style="left:1214.5px;top:85.2px;width:84.0px;height:21.8px;border:1px solid #444;border-radius:3.5px;background:#fff"></div><div class="t" style="left:1219.1px;top:91.6px;font-size:11.6px;font-weight:bold;letter-spacing:0.1px;color:#111;font-family:'Liberation Sans','Noto Sans CJK SC',sans-serif">1.基础图案</div><svg style="left:1285.9px;top:94.8px" width="9" height="5" viewBox="0 0 9 5"><path d="M0.3 0.2 H8.7 L4.5 4.8 Z" fill="#000"/></svg>
<div class="abs" style="left:1304.2px;top:85.2px;width:92.2px;height:21.8px;border:1px solid #444;border-radius:3.5px;background:#fff"></div><div class="t" style="left:1308.8px;top:91.6px;font-size:11.6px;font-weight:bold;letter-spacing:0.1px;color:#111;font-family:'Liberation Sans','Noto Sans CJK SC',sans-serif">1.基本图形</div><svg style="left:1383.8px;top:94.8px" width="9" height="5" viewBox="0 0 9 5"><path d="M0.3 0.2 H8.7 L4.5 4.8 Z" fill="#000"/></svg>
<svg style="left:1406px;top:90px" width="16" height="15" viewBox="0 0 16 15"><circle cx="6.6" cy="6.4" r="4.9" fill="none" stroke="#969696" stroke-width="2.1"/><path d="M10.2 10 L14 13" stroke="#969696" stroke-width="2.3" stroke-linecap="round"/></svg>
<div class="abs" style="left:1427.4px;top:112.6px;width:3.4px;height:141px;background:#d2d2d2"></div>
<svg style="left:0;top:0" width="1440" height="900" viewBox="0 0 1440 900">
<path d="M1221.6 129.4 L1248.6 129.4 L1248.6 116.4 L1275.8 142.8 L1248.6 169.2 L1248.6 156.2 L1221.6 156.2 Z" fill="none" stroke="#555" stroke-width="0.9" stroke-linejoin="miter"/><path d="M1289.6 129.2 L1329.2 129.2 L1343.6 142.8 L1329.2 156.4 L1289.6 156.4 Z" fill="none" stroke="#555" stroke-width="0.9" stroke-linejoin="miter"/><path d="M1357.8 126.4 L1397.2 126.4 L1411.6 142.8 L1397.2 159.2 L1357.8 159.2 L1372.2 142.8 Z" fill="none" stroke="#555" stroke-width="0.9" stroke-linejoin="miter"/><circle cx="1249.0" cy="220.6" r="27" fill="none" stroke="#555" stroke-width="0.9" stroke-linejoin="miter"/><circle cx="1249.0" cy="220.6" r="16.4" fill="none" stroke="#555" stroke-width="0.9" stroke-linejoin="miter"/><path d="M1303.2 193.6 L1330.0 193.6 L1330.0 207.2 L1343.6 207.2 L1343.6 234.0 L1330.0 234.0 L1330.0 247.6 L1303.2 247.6 L1303.2 234.0 L1289.6 234.0 L1289.6 207.2 L1303.2 207.2 Z" fill="none" stroke="#555" stroke-width="0.9" stroke-linejoin="miter"/><path d="M1384.8 193.6 L1395.4 203.8 L1390.2 203.8 L1390.2 215.2 L1401.6 215.2 L1401.6 210.0 L1411.8 220.6 L1401.6 231.2 L1401.6 226.0 L1390.2 226.0 L1390.2 237.4 L1395.4 237.4 L1384.8 247.6 L1374.2 237.4 L1379.4 237.4 L1379.4 226.0 L1368.0 226.0 L1368.0 231.2 L1357.8 220.6 L1368.0 210.0 L1368.0 215.2 L1379.4 215.2 L1379.4 203.8 L1374.2 203.8 Z" fill="none" stroke="#555" stroke-width="0.9" stroke-linejoin="miter"/><path d="M1222.0 299.0 L1232.4 288.4 L1232.4 293.8 L1265.6 293.8 L1265.6 288.4 L1276.0 299.0 L1265.6 309.6 L1265.6 304.2 L1232.4 304.2 L1232.4 309.6 Z" fill="none" stroke="#555" stroke-width="0.9" stroke-linejoin="miter"/><path d="M1316.6 273.0 L1322.9 292.5 L1343.4 292.5 L1326.9 304.5 L1333.2 324.0 L1316.6 312.0 L1300.0 324.0 L1306.3 304.5 L1289.8 292.5 L1310.3 292.5 Z" fill="none" stroke="#555" stroke-width="0.9" stroke-linejoin="miter"/><path d="M1384.8 324.2 C1376.8 315.8 1357.4 300.8 1357.4 287.8 C1357.4 271.8 1376.8 268.8 1384.8 279.2 C1392.8 268.8 1412.2 271.8 1412.2 287.8 C1412.2 300.8 1392.8 315.8 1384.8 324.2 Z" fill="none" stroke="#555" stroke-width="0.9" stroke-linejoin="miter"/><path d="M1248.4 377.3L1248.5 377.4L1248.6 377.6L1248.7 377.7L1248.7 377.9L1248.8 378.1L1248.8 378.3L1248.7 378.5L1248.7 378.7L1248.6 378.9L1248.5 379.2L1248.3 379.4L1248.1 379.6L1247.9 379.7L1247.7 379.9L1247.4 380.0L1247.1 380.1L1246.8 380.2L1246.5 380.2L1246.1 380.2L1245.8 380.2L1245.4 380.1L1245.0 379.9L1244.7 379.7L1244.4 379.5L1244.0 379.2L1243.8 378.9L1243.5 378.6L1243.3 378.2L1243.1 377.8L1243.0 377.3L1242.9 376.8L1242.8 376.3L1242.8 375.8L1242.9 375.3L1243.0 374.8L1243.2 374.3L1243.5 373.8L1243.8 373.3L1244.2 372.9L1244.6 372.5L1245.1 372.1L1245.6 371.8L1246.2 371.5L1246.8 371.3L1247.4 371.1L1248.1 371.0L1248.7 371.0L1249.4 371.1L1250.1 371.2L1250.8 371.5L1251.4 371.7L1252.1 372.1L1252.7 372.6L1253.2 373.1L1253.7 373.6L1254.2 374.3L1254.6 375.0L1254.9 375.7L1255.1 376.5L1255.3 377.3L1255.4 378.1L1255.4 379.0L1255.2 379.8L1255.0 380.7L1254.7 381.5L1254.3 382.3L1253.9 383.1L1253.3 383.9L1252.7 384.5L1251.9 385.1L1251.1 385.7L1250.3 386.1L1249.4 386.5L1248.4 386.8L1247.4 386.9L1246.4 387.0L1245.4 386.9L1244.3 386.8L1243.3 386.5L1242.3 386.1L1241.3 385.6L1240.4 385.1L1239.6 384.4L1238.8 383.6L1238.1 382.7L1237.5 381.7L1236.9 380.7L1236.5 379.6L1236.2 378.5L1236.1 377.3L1236.0 376.1L1236.1 374.9L1236.3 373.7L1236.6 372.5L1237.1 371.3L1237.7 370.2L1238.4 369.2L1239.2 368.2L1240.1 367.3L1241.2 366.5L1242.3 365.8L1243.5 365.2L1244.7 364.7L1246.0 364.4L1247.4 364.2L1248.8 364.2L1250.2 364.3L1251.5 364.5L1252.9 364.9L1254.2 365.5L1255.5 366.2L1256.7 367.0L1257.8 367.9L1258.8 369.0L1259.7 370.2L1260.5 371.5L1261.1 372.8L1261.7 374.3L1262.0 375.8L1262.2 377.3L1262.2 378.9L1262.1 380.4L1261.8 382.0L1261.3 383.5L1260.7 385.0L1259.9 386.4L1259.0 387.7L1257.9 389.0L1256.7 390.1L1255.4 391.1L1253.9 392.0L1252.4 392.7L1250.8 393.2L1249.1 393.6L1247.4 393.8L1245.7 393.8L1243.9 393.7L1242.2 393.3L1240.5 392.8L1238.9 392.1L1237.3 391.2L1235.8 390.2L1234.4 389.0L1233.2 387.6L1232.1 386.1L1231.1 384.5L1230.4 382.8L1229.8 381.0L1229.4 379.2L1229.2 377.3L1229.1 375.4L1229.3 373.5L1229.7 371.6L1230.3 369.7L1231.1 367.9L1232.1 366.2L1233.2 364.5L1234.6 363.1L1236.1 361.7L1237.7 360.5L1239.5 359.5L1241.3 358.6L1243.3 358.0L1245.3 357.5L1247.4 357.3L1249.5 357.3L1251.6 357.5L1253.7 358.0L1255.7 358.6L1257.7 359.5L1259.5 360.6L1261.3 361.9L1262.9 363.3L1264.4 365.0L1265.7 366.7L1266.8 368.7L1267.7 370.7L1268.4 372.8L1268.9 375.0L1269.1 377.3L1269.1 379.6L1268.9 381.9L1268.4 384.1L1267.6 386.3L1266.7 388.4L1265.5 390.5L1264.1 392.4L1262.5 394.1L1260.8 395.7L1258.8 397.1L1256.7 398.3L1254.5 399.3L1252.2 400.0L1249.8 400.5L1247.4 400.7L1244.9 400.7L1242.5 400.4L1240.1 399.9L1237.7 399.1L1235.4 398.1L1233.2 396.8L1231.2 395.3L1229.3 393.6L1227.6 391.7L1226.1 389.6L1224.8 387.3L1223.8 385.0L1223.0 382.5L1222.5 379.9L1222.2 377.3L1222.3 374.7L1222.6 372.0L1223.2 369.4L1224.0 366.9L1225.1 364.4L1226.5 362.1L1228.1 359.9L1230.0 357.9L1232.0 356.1L1234.2 354.5L1236.7 353.2L1239.2 352.1L1241.9 351.2L1244.6 350.7L1247.4 350.4L1250.2 350.5L1253.0 350.8L1255.8 351.4L1258.5 352.3L1261.1 353.5L1263.6 355.0L1265.9 356.7L1268.1 358.7L1270.0 360.9L1271.7 363.3L1273.1 365.9L1274.3 368.6L1275.2 371.4L1275.7 374.3L1276.0 377.3" fill="none" stroke="#555" stroke-width="0.9" stroke-linejoin="miter"/><path d="M1316.6 349.9 L1323.2 365.5 L1340.0 363.4 L1329.8 376.9 L1340.0 390.4 L1323.2 388.3 L1316.6 403.9 L1310.0 388.3 L1293.2 390.4 L1303.4 376.9 L1293.2 363.4 L1310.0 365.5 Z" fill="none" stroke="#555" stroke-width="0.9" stroke-linejoin="miter"/><path d="M1375.2 352.5 L1411.8 352.5 L1394.4 401.3 L1357.8 401.3 Z" fill="none" stroke="#333" stroke-width="1.1"/></svg>
<div class="shl" style="left:1209.0px;top:178.1px;width:80px">箭头</div><div class="shl" style="left:1276.6px;top:178.1px;width:80px">箭头1</div><div class="shl" style="left:1344.8px;top:178.1px;width:80px">箭头2</div><div class="shl" style="left:1209.0px;top:255.9px;width:80px">同心圆</div><div class="shl" style="left:1276.6px;top:255.9px;width:80px">十字</div><div class="shl" style="left:1344.8px;top:255.9px;width:80px">十字箭头</div><div class="shl" style="left:1209.0px;top:334.3px;width:80px">双箭头</div><div class="shl" style="left:1276.6px;top:334.3px;width:80px">五角星</div><div class="shl" style="left:1344.8px;top:334.3px;width:80px">心形</div><div class="shl" style="left:1209.0px;top:412.1px;width:80px">螺旋线</div><div class="shl" style="left:1276.6px;top:412.1px;width:80px">六角星</div><div class="shl" style="left:1344.8px;top:412.1px;width:80px">平行四边形</div>
<div class="abs" style="left:1243px;top:427px;width:8px;height:1px;background:#999"></div><div class="abs" style="left:1384px;top:427px;width:2px;height:1px;background:#999"></div>
<div class="abs" style="left:1215.2px;top:452.8px;width:218.6px;height:33.4px;background:#0a7dc9;border-radius:4px 4px 0 0"></div>
<div class="t" style="left:1220.4px;top:464px;padding-top:0.09em;font-size:12px;color:#fff;font-family:'Liberation Sans','Noto Sans CJK SC',sans-serif;letter-spacing:-0.2px">加工工艺</div><div class="t" style="left:1264.8px;top:465.1px;width:80px;text-align:center;font-size:12px;color:#fff;font-family:'Liberation Sans','Noto Sans CJK SC',sans-serif">速度</div><div class="t" style="left:1320.8px;top:465.1px;width:80px;text-align:center;font-size:12px;color:#fff;font-family:'Liberation Sans','Noto Sans CJK SC',sans-serif">功率</div><div class="t" style="left:1369.8px;top:465.1px;width:80px;text-align:center;font-size:12px;color:#fff;font-family:'Liberation Sans','Noto Sans CJK SC',sans-serif">输出</div>
<div class="abs" style="left:1215.2px;top:552px;width:218.6px;height:32.4px;background:#ebebeb"></div>
<div class="abs" style="left:1218.2px;top:495.6px;width:14.4px;height:14.4px;background:#e2443b"></div><div class="t" style="left:1239.4px;top:497.0px;padding-top:0.09em;font-size:11.6px;color:#111;font-weight:500;font-family:'Liberation Sans','Noto Sans CJK SC',sans-serif">描线</div><div class="t" style="left:1265.2px;top:497.1px;width:80px;text-align:center;font-size:12.6px;color:#000;font-weight:bold;font-family:'Liberation Sans','Noto Sans CJK SC',sans-serif">200.0</div><div class="t" style="left:1321.0px;top:497.1px;width:80px;text-align:center;font-size:12.6px;color:#000;font-weight:bold;font-family:'Liberation Sans','Noto Sans CJK SC',sans-serif">3.5</div><svg style="left:1400.6px;top:496.2px" width="20" height="14" viewBox="0 0 20 14"><path d="M0.8 7 C4 1.6 8 0.8 10 0.8 C12 0.8 16 1.6 19.2 7 C16 12.4 12 13.2 10 13.2 C8 13.2 4 12.4 0.8 7 Z" fill="none" stroke="#111" stroke-width="1.4"/><circle cx="10" cy="7" r="4.6" fill="none" stroke="#111" stroke-width="1.4"/><circle cx="10" cy="7" r="2.6" fill="none" stroke="#111" stroke-width="1.1"/></svg>
<div class="abs" style="left:1218.2px;top:528.4px;width:14.4px;height:14.4px;background:#ffff00"></div><div class="t" style="left:1239.4px;top:529.8px;padding-top:0.09em;font-size:11.6px;color:#111;font-weight:500;font-family:'Liberation Sans','Noto Sans CJK SC',sans-serif">浅雕</div><div class="t" style="left:1265.2px;top:529.9px;width:80px;text-align:center;font-size:12.6px;color:#000;font-weight:bold;font-family:'Liberation Sans','Noto Sans CJK SC',sans-serif">500.0</div><div class="t" style="left:1321.0px;top:529.9px;width:80px;text-align:center;font-size:12.6px;color:#000;font-weight:bold;font-family:'Liberation Sans','Noto Sans CJK SC',sans-serif">18.0</div><svg style="left:1400.6px;top:529.0px" width="20" height="14" viewBox="0 0 20 14"><path d="M0.8 7 C4 1.6 8 0.8 10 0.8 C12 0.8 16 1.6 19.2 7 C16 12.4 12 13.2 10 13.2 C8 13.2 4 12.4 0.8 7 Z" fill="none" stroke="#111" stroke-width="1.4"/><circle cx="10" cy="7" r="4.6" fill="none" stroke="#111" stroke-width="1.4"/><circle cx="10" cy="7" r="2.6" fill="none" stroke="#111" stroke-width="1.1"/></svg>
<div class="abs" style="left:1218.2px;top:561.4px;width:14.4px;height:14.4px;background:#000"></div><div class="t" style="left:1239.4px;top:562.8px;padding-top:0.09em;font-size:11.6px;color:#111;font-weight:500;font-family:'Liberation Sans','Noto Sans CJK SC',sans-serif">切割</div><div class="t" style="left:1265.2px;top:562.9px;width:80px;text-align:center;font-size:12.6px;color:#777;font-family:'Liberation Sans','Noto Sans CJK SC',sans-serif">80.0</div><div class="t" style="left:1321.0px;top:562.9px;width:80px;text-align:center;font-size:12.6px;color:#777;font-family:'Liberation Sans','Noto Sans CJK SC',sans-serif">55.0</div><svg style="left:1400.6px;top:562.0px" width="20" height="14" viewBox="0 0 20 14"><path d="M0.8 7 C4 1.6 8 0.8 10 0.8 C12 0.8 16 1.6 19.2 7 C16 12.4 12 13.2 10 13.2 C8 13.2 4 12.4 0.8 7 Z" fill="none" stroke="#111" stroke-width="1.4"/><circle cx="10" cy="7" r="4.6" fill="none" stroke="#111" stroke-width="1.4"/><circle cx="10" cy="7" r="2.6" fill="none" stroke="#111" stroke-width="1.1"/></svg>
<div class="abs" style="left:1266px;top:695px;width:108px;height:108px;border-radius:50%;border:4.2px solid #0a7dc9;background:#fff"></div><div class="abs" style="left:1273.4px;top:702.4px;width:93.2px;height:93.2px;border-radius:50%;background:#0a7dc9"></div><div class="t" style="left:1278.4px;top:737.2px;width:80px;text-align:center;padding-top:0.09em;font-size:24.4px;font-weight:500;color:#fff;font-family:'Liberation Sans','Noto Sans CJK SC',sans-serif">开始</div>
<div class="abs" style="left:1215.2px;top:818.4px;width:216px;height:24.8px;background:#d9d9d9;border-radius:3px"></div><div class="abs" style="left:1217px;top:820.2px;width:158px;height:21.2px;background:#fff;border-radius:2px"></div><svg style="left:1268.6px;top:823.6px" width="14" height="14" viewBox="0 0 14 14"><circle cx="7" cy="7" r="5.7" fill="none" stroke="#ee7d22" stroke-width="1.3"/><path d="M4.7 4.7 L9.3 9.3 M9.3 4.7 L4.7 9.3" stroke="#ee7d22" stroke-width="1.3"/></svg><div class="t" style="left:1288.4px;top:824.6px;padding-top:0.09em;font-size:11.6px;color:#ee7d22;font-family:'Liberation Sans','Noto Sans CJK SC',sans-serif">未连接</div><div class="t" style="left:1390.6px;top:824.8px;padding-top:0.09em;font-size:11.4px;color:#000;font-weight:500;font-family:'Liberation Sans','Noto Sans CJK SC',sans-serif">切换</div>

<!-- bottom -->
<div class="panel" style="left:-14px;top:810.6px;width:192.4px;height:41.2px;border-radius:13px"></div>
<div class="panel" style="left:187.4px;top:810.6px;width:169.2px;height:41.2px;border-radius:13px"></div>
<div class="abs" style="left:10px;top:821px;width:20px;height:20px;background:#000"></div><div class="abs" style="left:44px;top:821px;width:20px;height:20px;background:#ff0000"></div><div class="abs" style="left:78px;top:821px;width:20px;height:20px;background:#ffa50a"></div><div class="abs" style="left:112px;top:821px;width:20px;height:20px;background:#4a7ff2"></div><div class="abs" style="left:146px;top:821px;width:20px;height:20px;background:linear-gradient(180deg,#49b6ea 0%,#7d68d6 50%,#f4485c 100%)"></div>
<svg style="left:197px;top:821px" width="24" height="21" viewBox="0 0 24 21"><rect x="4.6" y="5" width="14.6" height="10.6" fill="none" stroke="#0a7dc9" stroke-width="2" stroke-width="2.8"/><path d="M2 6.2 V2.4 H6.2 M17.4 2.4 H21.6 V6.2 M21.6 14.4 V18.4 H17.4 M6.2 18.4 H2 V14.4" fill="none" stroke="#0a7dc9" stroke-width="2" stroke-width="1.7"/></svg>
<svg style="left:241px;top:821px" width="24" height="21" viewBox="0 0 24 21"><path d="M2 6.2 V2.4 H6.2 M17.4 2.4 H21.6 V6.2 M21.6 14.4 V18.4 H17.4 M6.2 18.4 H2 V14.4" fill="none" stroke="#0a7dc9" stroke-width="2" stroke-width="1.7"/><rect x="4.6" y="4.8" width="7.4" height="5" fill="#0a7dc9"/><path d="M16.2 4.4 L19.8 10.2 H12.6 Z" fill="#0a7dc9"/><ellipse cx="9" cy="14.4" rx="4.2" ry="2.4" fill="#0a7dc9"/></svg>
<svg style="left:286px;top:821px" width="22" height="22" viewBox="0 0 22 22"><g transform="translate(13.2 8.8) rotate(45)"><path d="M-5 6.4 V0 A5 5 0 0 1 5 0 V6.4" fill="none" stroke="#0a7dc9" stroke-width="5.4"/></g><path d="M8.6 12.6 L5.4 16.6 H7.6 L6.4 20.8 L10.6 15.6 H8.2 L9.8 12.6 Z" fill="#0a7dc9"/></svg>
<svg style="left:331.6px;top:822.6px" width="18" height="18" viewBox="0 0 18 18"><rect x="0" y="0" width="17.8" height="17.8" rx="1.6" fill="#0a7dc9"/><rect x="2.3" y="2.3" width="3.1" height="3.1" fill="#fff"/><rect x="7.3" y="2.3" width="3.1" height="3.1" fill="#fff"/><rect x="12.4" y="2.3" width="3.1" height="3.1" fill="#fff"/><rect x="2.3" y="7.3" width="3.1" height="3.1" fill="#fff"/><rect x="7.3" y="7.3" width="3.1" height="3.1" fill="#fff"/><rect x="12.4" y="7.3" width="3.1" height="3.1" fill="#fff"/><rect x="2.3" y="12.4" width="3.1" height="3.1" fill="#fff"/><rect x="7.3" y="12.4" width="3.1" height="3.1" fill="#fff"/><rect x="12.4" y="12.4" width="3.1" height="3.1" fill="#fff"/></svg>
<div class="abs" style="left:0;top:860px;width:1440px;height:40px;background:#1f1f1f"></div>
<div class="abs" style="left:310px;top:860px;width:159.4px;height:40px;background:#3e3e3e"></div>
<div class="abs" style="left:153.4px;top:898.2px;width:151.6px;height:1.8px;background:#76b9ed"></div><div class="abs" style="left:310.0px;top:898.2px;width:159.4px;height:1.8px;background:#76b9ed"></div><div class="abs" style="left:480.0px;top:898.2px;width:146.6px;height:1.8px;background:#76b9ed"></div><div class="abs" style="left:636.0px;top:898.2px;width:151.4px;height:1.8px;background:#76b9ed"></div>
<svg style="left:16px;top:872px" width="17" height="16" viewBox="0 0 17 16"><path d="M0 2.4 L6.8 1.4 V7.6 H0 Z M7.7 1.3 L16.4 0 V7.6 H7.7 Z M0 8.4 H6.8 V14.6 L0 13.6 Z M7.7 8.4 H16.4 V16 L7.7 14.7 Z" fill="#fff"/></svg>
<svg style="left:62px;top:867px" width="26" height="25" viewBox="0 0 26 25"><path d="M3.4 21.6 C0.6 17 5 8.6 13 4.6 C18.6 1.8 23.2 2.2 23.2 5.8" fill="none" stroke="#f3c520" stroke-width="2.1"/><path d="M13.2 4.4 C7.6 4.4 3.6 8.6 3.6 13.6 C3.6 18.8 7.8 22.6 13.2 22.6 C17.4 22.6 20.8 20.2 22.2 16.6 H16.6 C15.8 17.8 14.6 18.4 13.2 18.4 C10.8 18.4 9 16.8 8.8 14.6 H22.8 C23.2 8.6 19 4.4 13.2 4.4 Z M8.9 11.4 C9.4 9.6 11 8.4 13.2 8.4 C15.4 8.4 17 9.6 17.4 11.4 Z" fill="#35aaf0"/></svg>
<svg style="left:112px;top:868px" width="24" height="24" viewBox="0 0 24 24"><circle cx="12" cy="12" r="11.6" fill="#fff"/><path d="M12 12 L1.96 6.2 A11.6 11.6 0 0 1 22.04 6.2 Z" fill="#e33b2e"/><path d="M12 12 L22.04 6.2 A11.6 11.6 0 0 1 12 23.6 Z" fill="#f7cc2b"/><path d="M12 12 L12 23.6 A11.6 11.6 0 0 1 1.96 6.2 Z" fill="#2da94f"/><circle cx="12" cy="12" r="5.4" fill="#fff"/><circle cx="12" cy="12" r="4.2" fill="#3f86f4"/></svg>
<svg style="left:159px;top:868px" width="24" height="24" viewBox="0 0 24 24"><circle cx="12.4" cy="12.6" r="10.2" fill="#4fbf2c" stroke="#fff" stroke-width="1.5"/><path d="M12.2 6 C8.4 6 5.8 8.8 5.8 12.6 C5.8 16.6 8.6 19.2 12.4 19.2 C15.4 19.2 17.6 17.8 18.4 15.4 H15 C14.4 16.2 13.6 16.6 12.4 16.6 C10.6 16.6 9.4 15.6 9.2 13.8 H18.8 C19.2 9.2 16.6 6 12.2 6 Z M9.3 11.4 C9.6 9.8 10.6 8.8 12.2 8.8 C13.8 8.8 14.8 9.8 15 11.4 Z" fill="#fff"/><path d="M1.4 13 C0.8 7 6 1.4 13 1.2 C18 1 21.6 3.4 22.6 5" fill="none" stroke="#7fd04a" stroke-width="1.6"/></svg>
<div class="tk" style="left:186.8px;top:874.8px;font-size:12.4px;letter-spacing:0px">夜灯比拼活动 - 图...</div>
<svg style="left:320px;top:868px" width="24" height="24" viewBox="0 0 24 24"><rect x="0.4" y="0.4" width="23.2" height="23.2" rx="3" fill="#1d8fe0"/><rect x="0.4" y="16.6" width="23.2" height="7" rx="2" fill="#3cb4d8"/><path d="M8.6 3.4 H12.4 L9.6 14 H17 L16.2 16.4 H5.4 Z" fill="#fff"/><rect x="14.4" y="2.6" width="7" height="7" fill="#f5b81c"/><text x="15.2" y="8.8" font-size="6.6" font-weight="bold" font-family="Liberation Sans,sans-serif" fill="#1d6fb8">M</text><text x="2.4" y="21.8" font-size="3.6" font-style="italic" font-family="Liberation Sans,sans-serif" fill="#fff">LaserMaker</text></svg>
<div class="tk" style="left:347.6px;top:874.2px;font-size:13px;letter-spacing:0.1px">LaserMaker 2.0</div>
<svg style="left:483px;top:869px" width="16" height="23" viewBox="0 0 16 23"><path d="M1 1.4 H10 L14.6 3.6 V21.6 H1 Z" fill="#f7d36b"/><path d="M1 1.4 H4.4 V21.6 H1 Z" fill="#e9b43a"/><path d="M10 1.4 L14.6 3.6 H10 Z" fill="#fbe9a8"/></svg>
<div class="tk" style="left:508.4px;top:874.8px;font-size:12.4px;letter-spacing:0.1px">I:\激光切割机</div>
<svg style="left:642px;top:872px" width="25" height="18" viewBox="0 0 25 18"><defs><linearGradient id="wpsg" x1="0" y1="0" x2="1" y2="0"><stop offset="0" stop-color="#e8281f"/><stop offset="1" stop-color="#ff6a1a"/></linearGradient></defs><path d="M0.4 1 H4.8 L8 11.4 L11.2 1 H14 L17.2 11.4 L20.4 1 H24.4 L19.2 17 H15.6 L12.6 7.6 L9.6 17 H6 Z" fill="url(#wpsg)"/></svg>
<div class="tk" style="left:669.4px;top:874.8px;font-size:12.4px;letter-spacing:0.15px">关于广州市.doc - ...</div>
<svg style="left:1213px;top:874px" width="14" height="9" viewBox="0 0 14 9"><path d="M1.2 7.8 L7 1.8 L12.8 7.8" fill="none" stroke="#fff" stroke-width="1.4"/></svg>
<svg style="left:1235.6px;top:871.6px" width="17" height="17" viewBox="0 0 17 17"><circle cx="8.5" cy="8.5" r="7.6" fill="#62b52f" stroke="#d5e9c2" stroke-width="1.4"/><path d="M6.6 4 H10.4 V8 H12.8 L8.5 12.6 L4.2 8 H6.6 Z" fill="#fff"/></svg>
<svg style="left:1259px;top:872px" width="18" height="16" viewBox="0 0 18 16"><path d="M1.2 5.6 H4 L8 2 V14 L4 10.4 H1.2 Z" fill="none" stroke="#fff" stroke-width="1.2" stroke-linejoin="round"/><path d="M10.4 5.6 Q11.8 8 10.4 10.4 M12.4 3.8 Q14.8 8 12.4 12.2" fill="none" stroke="#fff" stroke-width="1.1"/><path d="M14.6 2.2 Q17.6 8 14.6 13.8" fill="none" stroke="#999" stroke-width="1"/></svg>
<svg style="left:1283.6px;top:872.4px" width="18" height="16" viewBox="0 0 18 16"><rect x="3.8" y="1" width="13" height="9.4" fill="none" stroke="#fff" stroke-width="1.2"/><path d="M8 10.4 V13.6 M4.6 14 H12.4" stroke="#fff" stroke-width="1.2"/><rect x="0.6" y="0.6" width="5" height="6.4" fill="#1f1f1f" stroke="#fff" stroke-width="1.1"/><path d="M1.8 2.6 H4.4 M1.8 4.6 H4.4" stroke="#fff" stroke-width="0.8"/></svg>
<div class="tk" style="left:1308.6px;top:873.8px;font-size:13.6px;font-family:'Liberation Sans','Noto Sans CJK SC',sans-serif">中</div>
<svg style="left:1335px;top:871px" width="18" height="18" viewBox="0 0 18 18"><path d="M2.6 1.6 L16.6 0.6 L15.4 15 L1.4 17 Z" fill="#ef4a1f"/><text x="3.6" y="14" font-size="14" font-weight="bold" font-style="italic" font-family="Liberation Sans,sans-serif" fill="#fff">S</text></svg>
<div class="tk" style="left:1373.4px;top:866.2px;font-size:12.2px;letter-spacing:0.4px">22:41:04</div>
<div class="tk" style="left:1368.8px;top:885px;font-size:12.2px;letter-spacing:0.8px">2024/5/18</div>
<div class="abs" style="left:1435px;top:860px;width:1px;height:40px;background:#777"></div>

</body></html>
